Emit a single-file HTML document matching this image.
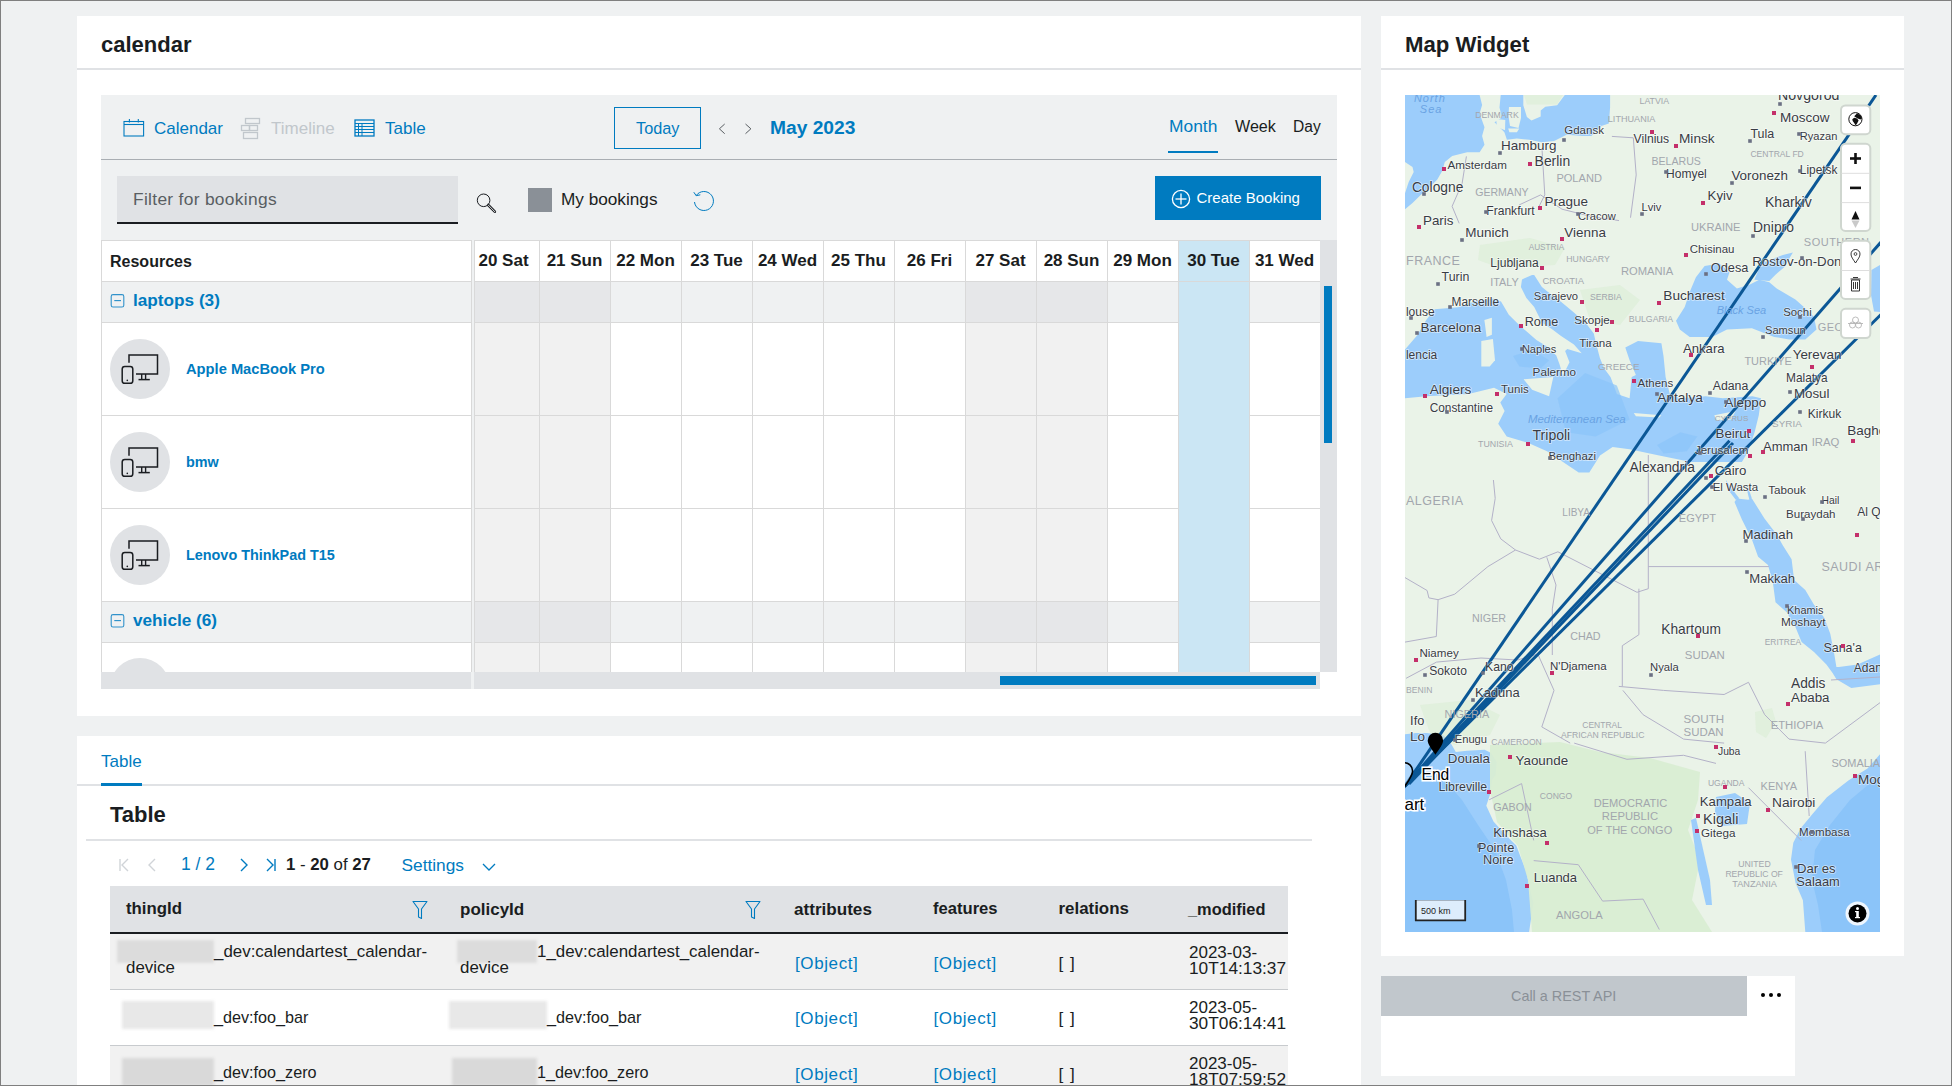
<!DOCTYPE html><html><head><meta charset="utf-8"><style>
html,body{margin:0;padding:0;}
body{width:1952px;height:1086px;overflow:hidden;position:relative;background:#eff1f2;font-family:"Liberation Sans",sans-serif;}
.t{position:absolute;white-space:pre;line-height:1;font-family:"Liberation Sans",sans-serif;}
.b{position:absolute;}
svg{position:absolute;overflow:visible;}
</style></head><body>
<div class="b" style="left:0;top:0;width:1950px;height:1084px;border:1px solid #7f7f7f;z-index:50;pointer-events:none"></div>
<div class="b" style="left:77px;top:16px;width:1284px;height:700px;background:#fff;"></div>
<div class="b" style="left:77px;top:68px;width:1284px;height:2px;background:#e0e2e5;"></div>
<div class="t" style="left:101px;top:33.88px;font-size:22px;color:#1a1d21;font-weight:700;">calendar</div>
<div class="b" style="left:101px;top:95px;width:1236px;height:594px;background:#eff1f2;"></div>
<div class="b" style="left:101px;top:159px;width:1236px;height:1px;background:#a9aeb3;"></div>
<svg style="left:123px;top:118px" width="22" height="20" viewBox="0 0 22 20">
<rect x="1" y="3.5" width="19.6" height="14.5" fill="none" stroke="#007bc0" stroke-width="1.1"/>
<line x1="1" y1="6.5" x2="20.6" y2="6.5" stroke="#007bc0" stroke-width="1.1"/>
<line x1="6.4" y1="1" x2="6.4" y2="4.5" stroke="#007bc0" stroke-width="1.1"/>
<line x1="15.3" y1="1" x2="15.3" y2="4.5" stroke="#007bc0" stroke-width="1.1"/>
</svg>
<div class="t" style="left:154px;top:119.61px;font-size:17px;color:#007bc0;font-weight:400;">Calendar</div>
<svg style="left:240px;top:117px" width="22" height="23" viewBox="0 0 22 23">
<rect x="5.5" y="1.5" width="14" height="5" fill="none" stroke="#c1c7cc" stroke-width="1.3"/>
<rect x="1.5" y="8.5" width="8" height="5" fill="none" stroke="#c1c7cc" stroke-width="1.3"/>
<rect x="9.5" y="8.5" width="8" height="5" fill="none" stroke="#c1c7cc" stroke-width="1.3"/>
<rect x="3.5" y="15.5" width="14" height="6" fill="none" stroke="#c1c7cc" stroke-width="1.3"/>
</svg>
<div class="t" style="left:271px;top:119.61px;font-size:17px;color:#c1c7cc;font-weight:400;">Timeline</div>
<svg style="left:354px;top:119px" width="22" height="19" viewBox="0 0 22 19">
<rect x="1" y="1" width="19" height="16" fill="none" stroke="#007bc0" stroke-width="1.3"/>
<line x1="1" y1="4.5" x2="20" y2="4.5" stroke="#007bc0" stroke-width="1"/>
<line x1="1" y1="7.5" x2="20" y2="7.5" stroke="#007bc0" stroke-width="1"/>
<line x1="1" y1="10.5" x2="20" y2="10.5" stroke="#007bc0" stroke-width="1"/>
<line x1="1" y1="13.5" x2="20" y2="13.5" stroke="#007bc0" stroke-width="1"/>
<line x1="4.5" y1="4" x2="4.5" y2="17" stroke="#007bc0" stroke-width="1"/>
<line x1="8" y1="4" x2="8" y2="17" stroke="#007bc0" stroke-width="1"/>
</svg>
<div class="t" style="left:385px;top:119.61px;font-size:17px;color:#007bc0;font-weight:400;">Table</div>
<div class="b" style="left:614px;top:107px;width:85px;height:40px;border:1px solid #007bc0;"></div>
<div class="t" style="left:636px;top:119.70px;font-size:16.3px;color:#007bc0;font-weight:400;">Today</div>
<svg style="left:716px;top:121px" width="40" height="16" viewBox="0 0 40 16">
<polyline points="8.7,3 3.4,7.8 8.7,12.7" fill="none" stroke="#595e62" stroke-width="1"/>
<polyline points="29.5,3 34.9,7.8 29.5,12.7" fill="none" stroke="#595e62" stroke-width="1"/>
</svg>
<div class="t" style="left:770px;top:117.75px;font-size:19.2px;color:#007bc0;font-weight:700;">May 2023</div>
<div class="t" style="left:1169px;top:117.77px;font-size:17.4px;color:#007bc0;font-weight:400;">Month</div>
<div class="b" style="left:1168px;top:151px;width:50px;height:2px;background:#007bc0;"></div>
<div class="t" style="left:1235px;top:118.37px;font-size:16.1px;color:#1a1d21;font-weight:400;">Week</div>
<div class="t" style="left:1293px;top:118.79px;font-size:15.6px;color:#1a1d21;font-weight:400;">Day</div>
<div class="b" style="left:117px;top:176px;width:341px;height:47px;background:#e0e2e5;"></div>
<div class="b" style="left:117px;top:222px;width:341px;height:1.5px;background:#1a1d21;"></div>
<div class="t" style="left:133px;top:191.27px;font-size:17.4px;color:#595e62;font-weight:400;letter-spacing:0.3px;">Filter for bookings</div>
<svg style="left:474px;top:191px" width="24" height="24" viewBox="0 0 24 24">
<circle cx="9.6" cy="9.3" r="6.3" fill="none" stroke="#1a1d21" stroke-width="1"/>
<line x1="14.2" y1="14" x2="20.8" y2="20.7" stroke="#1a1d21" stroke-width="2.6" stroke-linecap="round"/>
<line x1="14.2" y1="14" x2="20.8" y2="20.7" stroke="#eff1f2" stroke-width="0.9" stroke-linecap="round"/>
</svg>
<div class="b" style="left:528px;top:188px;width:24px;height:24px;background:#8a9097;"></div>
<div class="t" style="left:561px;top:191.44px;font-size:17.2px;color:#1a1d21;font-weight:400;">My bookings</div>
<svg style="left:689px;top:187px" width="28" height="28" viewBox="0 0 28 28">
<path d="M7.2,8.5 A9.5,9.5 0 1 1 5.5,15" fill="none" stroke="#007bc0" stroke-width="1"/>
<polyline points="4.8,5.2 7.2,8.7 11.3,7.8" fill="none" stroke="#007bc0" stroke-width="1"/>
</svg>
<div class="b" style="left:1155px;top:176px;width:166px;height:44px;background:#007bc0;"></div>
<svg style="left:1171px;top:189px" width="20" height="20" viewBox="0 0 20 20">
<circle cx="10" cy="10" r="8.6" fill="none" stroke="#fff" stroke-width="1.3"/>
<line x1="10" y1="4.5" x2="10" y2="15.5" stroke="#fff" stroke-width="1.3"/>
<line x1="4.5" y1="10" x2="15.5" y2="10" stroke="#fff" stroke-width="1.3"/>
</svg>
<div class="t" style="left:1196.5px;top:190.30px;font-size:15px;color:#fff;font-weight:400;">Create Booking</div>
<div class="b" style="left:101px;top:240px;width:1236px;height:449px;background:#ffffff;"></div>
<div class="b" style="left:101px;top:240px;width:370px;height:432px;background:#fff;"></div>
<div class="b" style="left:101px;top:240px;width:370px;height:41px;background:#fff;"></div>
<div class="b" style="left:474px;top:240px;width:65px;height:41px;background:#fff;"></div>
<div class="b" style="left:539px;top:240px;width:71px;height:41px;background:#fff;"></div>
<div class="b" style="left:610px;top:240px;width:71px;height:41px;background:#fff;"></div>
<div class="b" style="left:681px;top:240px;width:71px;height:41px;background:#fff;"></div>
<div class="b" style="left:752px;top:240px;width:71px;height:41px;background:#fff;"></div>
<div class="b" style="left:823px;top:240px;width:71px;height:41px;background:#fff;"></div>
<div class="b" style="left:894px;top:240px;width:71px;height:41px;background:#fff;"></div>
<div class="b" style="left:965px;top:240px;width:71px;height:41px;background:#fff;"></div>
<div class="b" style="left:1036px;top:240px;width:71px;height:41px;background:#fff;"></div>
<div class="b" style="left:1107px;top:240px;width:71px;height:41px;background:#fff;"></div>
<div class="b" style="left:1178px;top:240px;width:71px;height:41px;background:#cbe6f4;"></div>
<div class="b" style="left:1249px;top:240px;width:71px;height:41px;background:#fff;"></div>
<div class="b" style="left:101px;top:281px;width:370px;height:41px;background:#eff1f2;"></div>
<div class="b" style="left:474px;top:281px;width:65px;height:41px;background:#e6e7e9;"></div>
<div class="b" style="left:539px;top:281px;width:71px;height:41px;background:#e6e7e9;"></div>
<div class="b" style="left:610px;top:281px;width:71px;height:41px;background:#eff1f2;"></div>
<div class="b" style="left:681px;top:281px;width:71px;height:41px;background:#eff1f2;"></div>
<div class="b" style="left:752px;top:281px;width:71px;height:41px;background:#eff1f2;"></div>
<div class="b" style="left:823px;top:281px;width:71px;height:41px;background:#eff1f2;"></div>
<div class="b" style="left:894px;top:281px;width:71px;height:41px;background:#eff1f2;"></div>
<div class="b" style="left:965px;top:281px;width:71px;height:41px;background:#e6e7e9;"></div>
<div class="b" style="left:1036px;top:281px;width:71px;height:41px;background:#e6e7e9;"></div>
<div class="b" style="left:1107px;top:281px;width:71px;height:41px;background:#eff1f2;"></div>
<div class="b" style="left:1178px;top:281px;width:71px;height:41px;background:#cbe6f4;"></div>
<div class="b" style="left:1249px;top:281px;width:71px;height:41px;background:#eff1f2;"></div>
<div class="b" style="left:101px;top:322px;width:370px;height:93px;background:#fff;"></div>
<div class="b" style="left:474px;top:322px;width:65px;height:93px;background:#f1f1f1;"></div>
<div class="b" style="left:539px;top:322px;width:71px;height:93px;background:#f1f1f1;"></div>
<div class="b" style="left:610px;top:322px;width:71px;height:93px;background:#fff;"></div>
<div class="b" style="left:681px;top:322px;width:71px;height:93px;background:#fff;"></div>
<div class="b" style="left:752px;top:322px;width:71px;height:93px;background:#fff;"></div>
<div class="b" style="left:823px;top:322px;width:71px;height:93px;background:#fff;"></div>
<div class="b" style="left:894px;top:322px;width:71px;height:93px;background:#fff;"></div>
<div class="b" style="left:965px;top:322px;width:71px;height:93px;background:#f1f1f1;"></div>
<div class="b" style="left:1036px;top:322px;width:71px;height:93px;background:#f1f1f1;"></div>
<div class="b" style="left:1107px;top:322px;width:71px;height:93px;background:#fff;"></div>
<div class="b" style="left:1178px;top:322px;width:71px;height:93px;background:#cbe6f4;"></div>
<div class="b" style="left:1249px;top:322px;width:71px;height:93px;background:#fff;"></div>
<div class="b" style="left:101px;top:415px;width:370px;height:93px;background:#fff;"></div>
<div class="b" style="left:474px;top:415px;width:65px;height:93px;background:#f1f1f1;"></div>
<div class="b" style="left:539px;top:415px;width:71px;height:93px;background:#f1f1f1;"></div>
<div class="b" style="left:610px;top:415px;width:71px;height:93px;background:#fff;"></div>
<div class="b" style="left:681px;top:415px;width:71px;height:93px;background:#fff;"></div>
<div class="b" style="left:752px;top:415px;width:71px;height:93px;background:#fff;"></div>
<div class="b" style="left:823px;top:415px;width:71px;height:93px;background:#fff;"></div>
<div class="b" style="left:894px;top:415px;width:71px;height:93px;background:#fff;"></div>
<div class="b" style="left:965px;top:415px;width:71px;height:93px;background:#f1f1f1;"></div>
<div class="b" style="left:1036px;top:415px;width:71px;height:93px;background:#f1f1f1;"></div>
<div class="b" style="left:1107px;top:415px;width:71px;height:93px;background:#fff;"></div>
<div class="b" style="left:1178px;top:415px;width:71px;height:93px;background:#cbe6f4;"></div>
<div class="b" style="left:1249px;top:415px;width:71px;height:93px;background:#fff;"></div>
<div class="b" style="left:101px;top:508px;width:370px;height:93px;background:#fff;"></div>
<div class="b" style="left:474px;top:508px;width:65px;height:93px;background:#f1f1f1;"></div>
<div class="b" style="left:539px;top:508px;width:71px;height:93px;background:#f1f1f1;"></div>
<div class="b" style="left:610px;top:508px;width:71px;height:93px;background:#fff;"></div>
<div class="b" style="left:681px;top:508px;width:71px;height:93px;background:#fff;"></div>
<div class="b" style="left:752px;top:508px;width:71px;height:93px;background:#fff;"></div>
<div class="b" style="left:823px;top:508px;width:71px;height:93px;background:#fff;"></div>
<div class="b" style="left:894px;top:508px;width:71px;height:93px;background:#fff;"></div>
<div class="b" style="left:965px;top:508px;width:71px;height:93px;background:#f1f1f1;"></div>
<div class="b" style="left:1036px;top:508px;width:71px;height:93px;background:#f1f1f1;"></div>
<div class="b" style="left:1107px;top:508px;width:71px;height:93px;background:#fff;"></div>
<div class="b" style="left:1178px;top:508px;width:71px;height:93px;background:#cbe6f4;"></div>
<div class="b" style="left:1249px;top:508px;width:71px;height:93px;background:#fff;"></div>
<div class="b" style="left:101px;top:601px;width:370px;height:41px;background:#eff1f2;"></div>
<div class="b" style="left:474px;top:601px;width:65px;height:41px;background:#e6e7e9;"></div>
<div class="b" style="left:539px;top:601px;width:71px;height:41px;background:#e6e7e9;"></div>
<div class="b" style="left:610px;top:601px;width:71px;height:41px;background:#eff1f2;"></div>
<div class="b" style="left:681px;top:601px;width:71px;height:41px;background:#eff1f2;"></div>
<div class="b" style="left:752px;top:601px;width:71px;height:41px;background:#eff1f2;"></div>
<div class="b" style="left:823px;top:601px;width:71px;height:41px;background:#eff1f2;"></div>
<div class="b" style="left:894px;top:601px;width:71px;height:41px;background:#eff1f2;"></div>
<div class="b" style="left:965px;top:601px;width:71px;height:41px;background:#e6e7e9;"></div>
<div class="b" style="left:1036px;top:601px;width:71px;height:41px;background:#e6e7e9;"></div>
<div class="b" style="left:1107px;top:601px;width:71px;height:41px;background:#eff1f2;"></div>
<div class="b" style="left:1178px;top:601px;width:71px;height:41px;background:#cbe6f4;"></div>
<div class="b" style="left:1249px;top:601px;width:71px;height:41px;background:#eff1f2;"></div>
<div class="b" style="left:101px;top:642px;width:370px;height:30px;background:#fff;"></div>
<div class="b" style="left:474px;top:642px;width:65px;height:30px;background:#f1f1f1;"></div>
<div class="b" style="left:539px;top:642px;width:71px;height:30px;background:#f1f1f1;"></div>
<div class="b" style="left:610px;top:642px;width:71px;height:30px;background:#fff;"></div>
<div class="b" style="left:681px;top:642px;width:71px;height:30px;background:#fff;"></div>
<div class="b" style="left:752px;top:642px;width:71px;height:30px;background:#fff;"></div>
<div class="b" style="left:823px;top:642px;width:71px;height:30px;background:#fff;"></div>
<div class="b" style="left:894px;top:642px;width:71px;height:30px;background:#fff;"></div>
<div class="b" style="left:965px;top:642px;width:71px;height:30px;background:#f1f1f1;"></div>
<div class="b" style="left:1036px;top:642px;width:71px;height:30px;background:#f1f1f1;"></div>
<div class="b" style="left:1107px;top:642px;width:71px;height:30px;background:#fff;"></div>
<div class="b" style="left:1178px;top:642px;width:71px;height:30px;background:#cbe6f4;"></div>
<div class="b" style="left:1249px;top:642px;width:71px;height:30px;background:#fff;"></div>
<div class="b" style="left:101px;top:281px;width:370px;height:1px;background:#d9d9d9;"></div>
<div class="b" style="left:474px;top:281px;width:846px;height:1px;background:#d9d9d9;"></div>
<div class="b" style="left:101px;top:322px;width:370px;height:1px;background:#d9d9d9;"></div>
<div class="b" style="left:474px;top:322px;width:846px;height:1px;background:#d9d9d9;"></div>
<div class="b" style="left:101px;top:415px;width:370px;height:1px;background:#d9d9d9;"></div>
<div class="b" style="left:474px;top:415px;width:846px;height:1px;background:#d9d9d9;"></div>
<div class="b" style="left:101px;top:508px;width:370px;height:1px;background:#d9d9d9;"></div>
<div class="b" style="left:474px;top:508px;width:846px;height:1px;background:#d9d9d9;"></div>
<div class="b" style="left:101px;top:601px;width:370px;height:1px;background:#d9d9d9;"></div>
<div class="b" style="left:474px;top:601px;width:846px;height:1px;background:#d9d9d9;"></div>
<div class="b" style="left:101px;top:642px;width:370px;height:1px;background:#d9d9d9;"></div>
<div class="b" style="left:474px;top:642px;width:846px;height:1px;background:#d9d9d9;"></div>
<div class="b" style="left:101px;top:240px;width:1236px;height:1px;background:#d9d9d9;"></div>
<div class="b" style="left:101px;top:240px;width:1px;height:449px;background:#d9d9d9;"></div>
<div class="b" style="left:471px;top:240px;width:1px;height:432px;background:#d9d9d9;"></div>
<div class="b" style="left:474px;top:240px;width:1px;height:432px;background:#d9d9d9;"></div>
<div class="b" style="left:472px;top:240px;width:2px;height:432px;background:#eff1f2;"></div>
<div class="b" style="left:539px;top:240px;width:1px;height:432px;background:#d9d9d9;"></div>
<div class="b" style="left:610px;top:240px;width:1px;height:432px;background:#d9d9d9;"></div>
<div class="b" style="left:681px;top:240px;width:1px;height:432px;background:#d9d9d9;"></div>
<div class="b" style="left:752px;top:240px;width:1px;height:432px;background:#d9d9d9;"></div>
<div class="b" style="left:823px;top:240px;width:1px;height:432px;background:#d9d9d9;"></div>
<div class="b" style="left:894px;top:240px;width:1px;height:432px;background:#d9d9d9;"></div>
<div class="b" style="left:965px;top:240px;width:1px;height:432px;background:#d9d9d9;"></div>
<div class="b" style="left:1036px;top:240px;width:1px;height:432px;background:#d9d9d9;"></div>
<div class="b" style="left:1107px;top:240px;width:1px;height:432px;background:#d9d9d9;"></div>
<div class="b" style="left:1178px;top:240px;width:1px;height:432px;background:#d9d9d9;"></div>
<div class="b" style="left:1249px;top:240px;width:1px;height:432px;background:#d9d9d9;"></div>
<div class="b" style="left:1320px;top:240px;width:1px;height:432px;background:#d9d9d9;"></div>
<div class="b" style="left:1179px;top:282px;width:70px;height:390px;background:#cbe6f4;"></div>
<div class="t" style="left:110px;top:253.76px;font-size:16px;color:#1a1d21;font-weight:700;">Resources</div>
<div class="t" style="left:468px;width:71px;top:252.01px;font-size:17px;font-weight:700;color:#1a1d21;text-align:center">20 Sat</div>
<div class="t" style="left:539px;width:71px;top:252.01px;font-size:17px;font-weight:700;color:#1a1d21;text-align:center">21 Sun</div>
<div class="t" style="left:610px;width:71px;top:252.01px;font-size:17px;font-weight:700;color:#1a1d21;text-align:center">22 Mon</div>
<div class="t" style="left:681px;width:71px;top:252.01px;font-size:17px;font-weight:700;color:#1a1d21;text-align:center">23 Tue</div>
<div class="t" style="left:752px;width:71px;top:252.01px;font-size:17px;font-weight:700;color:#1a1d21;text-align:center">24 Wed</div>
<div class="t" style="left:823px;width:71px;top:252.01px;font-size:17px;font-weight:700;color:#1a1d21;text-align:center">25 Thu</div>
<div class="t" style="left:894px;width:71px;top:252.01px;font-size:17px;font-weight:700;color:#1a1d21;text-align:center">26 Fri</div>
<div class="t" style="left:965px;width:71px;top:252.01px;font-size:17px;font-weight:700;color:#1a1d21;text-align:center">27 Sat</div>
<div class="t" style="left:1036px;width:71px;top:252.01px;font-size:17px;font-weight:700;color:#1a1d21;text-align:center">28 Sun</div>
<div class="t" style="left:1107px;width:71px;top:252.01px;font-size:17px;font-weight:700;color:#1a1d21;text-align:center">29 Mon</div>
<div class="t" style="left:1178px;width:71px;top:252.01px;font-size:17px;font-weight:700;color:#1a1d21;text-align:center">30 Tue</div>
<div class="t" style="left:1249px;width:71px;top:252.01px;font-size:17px;font-weight:700;color:#1a1d21;text-align:center">31 Wed</div>
<svg style="left:110px;top:294px" width="14" height="14" viewBox="0 0 14 14">
<rect x="1.2" y="0.6" width="12.6" height="12.4" rx="1.8" fill="none" stroke="#007bc0" stroke-opacity="0.8" stroke-width="1.1"/>
<line x1="4.3" y1="6.6" x2="11" y2="6.6" stroke="#007bc0" stroke-opacity="0.85" stroke-width="1.1"/>
</svg>
<div class="t" style="left:133px;top:292.44px;font-size:17.2px;color:#007bc0;font-weight:700;">laptops (3)</div>
<svg style="left:110px;top:614px" width="14" height="14" viewBox="0 0 14 14">
<rect x="1.2" y="0.6" width="12.6" height="12.4" rx="1.8" fill="none" stroke="#007bc0" stroke-opacity="0.8" stroke-width="1.1"/>
<line x1="4.3" y1="6.6" x2="11" y2="6.6" stroke="#007bc0" stroke-opacity="0.85" stroke-width="1.1"/>
</svg>
<div class="t" style="left:133px;top:612.44px;font-size:17.2px;color:#007bc0;font-weight:700;">vehicle (6)</div>
<div class="b" style="left:110px;top:339px;width:60px;height:60px;border-radius:50%;background:#e0e2e5"></div>
<svg style="left:118px;top:347px" width="44" height="44" viewBox="0 0 44 44">
<path d="M11,15.8 V8 H39.5 V27 H18" fill="none" stroke="#1a1d21" stroke-width="1.5"/>
<rect x="4.2" y="19.5" width="10.6" height="16.8" rx="2.6" fill="none" stroke="#1a1d21" stroke-width="1.5"/>
<line x1="23.7" y1="27" x2="23.7" y2="32.5" stroke="#1a1d21" stroke-width="1.4"/>
<line x1="27.6" y1="27" x2="27.6" y2="32.5" stroke="#1a1d21" stroke-width="1.4"/>
<line x1="20.5" y1="32.6" x2="31.8" y2="32.6" stroke="#1a1d21" stroke-width="1.5"/>
<circle cx="9.3" cy="33.4" r="0.8" fill="#1a1d21"/>
</svg>
<div class="b" style="left:110px;top:432px;width:60px;height:60px;border-radius:50%;background:#e0e2e5"></div>
<svg style="left:118px;top:440px" width="44" height="44" viewBox="0 0 44 44">
<path d="M11,15.8 V8 H39.5 V27 H18" fill="none" stroke="#1a1d21" stroke-width="1.5"/>
<rect x="4.2" y="19.5" width="10.6" height="16.8" rx="2.6" fill="none" stroke="#1a1d21" stroke-width="1.5"/>
<line x1="23.7" y1="27" x2="23.7" y2="32.5" stroke="#1a1d21" stroke-width="1.4"/>
<line x1="27.6" y1="27" x2="27.6" y2="32.5" stroke="#1a1d21" stroke-width="1.4"/>
<line x1="20.5" y1="32.6" x2="31.8" y2="32.6" stroke="#1a1d21" stroke-width="1.5"/>
<circle cx="9.3" cy="33.4" r="0.8" fill="#1a1d21"/>
</svg>
<div class="b" style="left:110px;top:525px;width:60px;height:60px;border-radius:50%;background:#e0e2e5"></div>
<svg style="left:118px;top:533px" width="44" height="44" viewBox="0 0 44 44">
<path d="M11,15.8 V8 H39.5 V27 H18" fill="none" stroke="#1a1d21" stroke-width="1.5"/>
<rect x="4.2" y="19.5" width="10.6" height="16.8" rx="2.6" fill="none" stroke="#1a1d21" stroke-width="1.5"/>
<line x1="23.7" y1="27" x2="23.7" y2="32.5" stroke="#1a1d21" stroke-width="1.4"/>
<line x1="27.6" y1="27" x2="27.6" y2="32.5" stroke="#1a1d21" stroke-width="1.4"/>
<line x1="20.5" y1="32.6" x2="31.8" y2="32.6" stroke="#1a1d21" stroke-width="1.5"/>
<circle cx="9.3" cy="33.4" r="0.8" fill="#1a1d21"/>
</svg>
<div class="t" style="left:186px;top:361.96px;font-size:14.7px;color:#007bc0;font-weight:700;">Apple MacBook Pro</div>
<div class="t" style="left:186px;top:455.21px;font-size:14.4px;color:#007bc0;font-weight:700;">bmw</div>
<div class="t" style="left:186px;top:548.21px;font-size:14.4px;color:#007bc0;font-weight:700;">Lenovo ThinkPad T15</div>
<div class="b" style="left:110px;top:658px;width:60px;height:14px;overflow:hidden"><div style="width:60px;height:60px;border-radius:50%;background:#e0e2e5"></div></div>
<div class="b" style="left:1320px;top:240px;width:17px;height:432px;background:#e0e2e5;"></div>
<div class="b" style="left:1324px;top:286px;width:8px;height:157px;background:#007bc0;"></div>
<div class="b" style="left:101px;top:672px;width:1219px;height:17px;background:#e0e2e5;"></div>
<div class="b" style="left:471px;top:672px;width:3px;height:17px;background:#eff1f2;"></div>
<div class="b" style="left:1000px;top:676px;width:316px;height:9px;background:#007bc0;"></div>
<div class="b" style="left:1320px;top:672px;width:17px;height:17px;background:#fff;"></div>
<div class="b" style="left:77px;top:736px;width:1284px;height:350px;background:#fff;"></div>
<div class="b" style="left:77px;top:784px;width:1284px;height:2px;background:#e0e2e5;"></div>
<div class="t" style="left:101px;top:752.61px;font-size:17px;color:#007bc0;font-weight:400;">Table</div>
<div class="b" style="left:101px;top:783px;width:41px;height:3px;background:#007bc0;"></div>
<div class="t" style="left:110px;top:804.38px;font-size:22px;color:#1a1d21;font-weight:700;">Table</div>
<div class="b" style="left:86px;top:839px;width:1226px;height:2px;background:#e0e2e5;"></div>
<svg style="left:115px;top:856px" width="390" height="20" viewBox="0 0 390 20">
<line x1="5" y1="3" x2="5" y2="15" stroke="#d0d4d8" stroke-width="1.4"/>
<polyline points="13,3 7,9 13,15" fill="none" stroke="#d0d4d8" stroke-width="1.4"/>
<polyline points="40,3 34,9 40,15" fill="none" stroke="#d0d4d8" stroke-width="1.4"/>
<polyline points="126,3 132,9 126,15" fill="none" stroke="#007bc0" stroke-width="1.4"/>
<polyline points="152,3 158,9 152,15" fill="none" stroke="#007bc0" stroke-width="1.4"/>
<line x1="160" y1="3" x2="160" y2="15" stroke="#007bc0" stroke-width="1.4"/>
<polyline points="368,8 374,14 380,8" fill="none" stroke="#007bc0" stroke-width="1.3"/>
</svg>
<div class="t" style="left:181px;top:856.39px;font-size:17.5px;color:#007bc0;font-weight:400;">1 / 2</div>
<div class="t" style="left:286px;top:856.98px;font-size:16.8px;color:#1a1d21"><b>1</b> - <b>20</b> of <b>27</b></div>
<div class="t" style="left:401.5px;top:856.56px;font-size:17.3px;color:#007bc0;font-weight:400;">Settings</div>
<div class="b" style="left:110px;top:886px;width:1178px;height:47px;background:#e0e2e5;"></div>
<div class="b" style="left:110px;top:932px;width:1178px;height:1.5px;background:#1a1d21;"></div>
<div class="t" style="left:126px;top:900.78px;font-size:16.8px;color:#1a1d21;font-weight:700;">thingId</div>
<div class="t" style="left:460px;top:900.61px;font-size:17px;color:#1a1d21;font-weight:700;">policyId</div>
<div class="t" style="left:794px;top:900.52px;font-size:17.1px;color:#1a1d21;font-weight:700;">attributes</div>
<div class="t" style="left:933px;top:900.95px;font-size:16.6px;color:#1a1d21;font-weight:700;">features</div>
<div class="t" style="left:1058.5px;top:900.69px;font-size:16.9px;color:#1a1d21;font-weight:700;">relations</div>
<div class="t" style="left:1188px;top:901.12px;font-size:16.4px;color:#1a1d21;font-weight:700;">_modified</div>
<svg style="left:412px;top:900px" width="16" height="20" viewBox="0 0 16 20">
<path d="M1,1.5 H15 L9.5,9 V18.5 L6.5,17 V9 Z" fill="none" stroke="#007bc0" stroke-width="1.1" stroke-linejoin="round"/>
</svg>
<svg style="left:745px;top:900px" width="16" height="20" viewBox="0 0 16 20">
<path d="M1,1.5 H15 L9.5,9 V18.5 L6.5,17 V9 Z" fill="none" stroke="#007bc0" stroke-width="1.1" stroke-linejoin="round"/>
</svg>
<div class="b" style="left:110px;top:934px;width:1178px;height:55px;background:#f1f1f1;"></div>
<div class="b" style="left:110px;top:989px;width:1178px;height:56px;background:#fff;"></div>
<div class="b" style="left:110px;top:1045px;width:1178px;height:41px;background:#f1f1f1;"></div>
<div class="b" style="left:110px;top:989px;width:1178px;height:1px;background:#c8cbce;"></div>
<div class="b" style="left:110px;top:1045px;width:1178px;height:1px;background:#c8cbce;"></div>
<div class="b" style="left:117px;top:940px;width:97px;height:23px;background:#dcdcdc;filter:blur(1.5px)"></div>
<div class="b" style="left:457px;top:940px;width:80px;height:23px;background:#dcdcdc;filter:blur(1.5px)"></div>
<div class="b" style="left:122px;top:1001px;width:92px;height:28px;background:#e8e8e8;filter:blur(1.5px)"></div>
<div class="b" style="left:449px;top:1001px;width:98px;height:28px;background:#e8e8e8;filter:blur(1.5px)"></div>
<div class="b" style="left:122px;top:1058px;width:92px;height:28px;background:#d9d9d9;filter:blur(1.5px)"></div>
<div class="b" style="left:452px;top:1058px;width:85px;height:28px;background:#d9d9d9;filter:blur(1.5px)"></div>
<div class="t" style="left:214px;top:943.69px;font-size:16.9px;color:#1a1d21;font-weight:400;">_dev:calendartest_calendar-</div>
<div class="t" style="left:126px;top:959.69px;font-size:16.9px;color:#1a1d21;font-weight:400;">device</div>
<div class="t" style="left:537px;top:943.69px;font-size:16.9px;color:#1a1d21;font-weight:400;">1_dev:calendartest_calendar-</div>
<div class="t" style="left:460px;top:959.69px;font-size:16.9px;color:#1a1d21;font-weight:400;">device</div>
<div class="t" style="left:214px;top:1008.99px;font-size:16.2px;color:#1a1d21;font-weight:400;">_dev:foo_bar</div>
<div class="t" style="left:547px;top:1008.99px;font-size:16.2px;color:#1a1d21;font-weight:400;">_dev:foo_bar</div>
<div class="t" style="left:214px;top:1064.29px;font-size:16.2px;color:#1a1d21;font-weight:400;">_dev:foo_zero</div>
<div class="t" style="left:537px;top:1064.29px;font-size:16.2px;color:#1a1d21;font-weight:400;">1_dev:foo_zero</div>
<div class="t" style="left:795px;top:954.61px;font-size:17px;color:#007bc0;font-weight:400;letter-spacing:0.6px;">[Object]</div>
<div class="t" style="left:933.5px;top:954.61px;font-size:17px;color:#007bc0;font-weight:400;letter-spacing:0.6px;">[Object]</div>
<div class="t" style="left:1058.5px;top:954.61px;font-size:17px;color:#1a1d21;font-weight:400;letter-spacing:1px;">[ ]</div>
<div class="t" style="left:795px;top:1010.01px;font-size:17px;color:#007bc0;font-weight:400;letter-spacing:0.6px;">[Object]</div>
<div class="t" style="left:933.5px;top:1010.01px;font-size:17px;color:#007bc0;font-weight:400;letter-spacing:0.6px;">[Object]</div>
<div class="t" style="left:1058.5px;top:1010.01px;font-size:17px;color:#1a1d21;font-weight:400;letter-spacing:1px;">[ ]</div>
<div class="t" style="left:795px;top:1065.61px;font-size:17px;color:#007bc0;font-weight:400;letter-spacing:0.6px;">[Object]</div>
<div class="t" style="left:933.5px;top:1065.61px;font-size:17px;color:#007bc0;font-weight:400;letter-spacing:0.6px;">[Object]</div>
<div class="t" style="left:1058.5px;top:1065.61px;font-size:17px;color:#1a1d21;font-weight:400;letter-spacing:1px;">[ ]</div>
<div class="t" style="left:1189px;top:943.61px;font-size:17px;color:#1a1d21;font-weight:400;">2023-03-</div>
<div class="t" style="left:1189px;top:959.76px;font-size:17.3px;color:#1a1d21;font-weight:400;">10T14:13:37</div>
<div class="t" style="left:1189px;top:999.11px;font-size:17px;color:#1a1d21;font-weight:400;">2023-05-</div>
<div class="t" style="left:1189px;top:1015.26px;font-size:17.3px;color:#1a1d21;font-weight:400;">30T06:14:41</div>
<div class="t" style="left:1189px;top:1055.11px;font-size:17px;color:#1a1d21;font-weight:400;">2023-05-</div>
<div class="t" style="left:1189px;top:1071.26px;font-size:17.3px;color:#1a1d21;font-weight:400;">18T07:59:52</div>
<div class="b" style="left:1381px;top:16px;width:523px;height:940px;background:#fff;"></div>
<div class="b" style="left:1381px;top:68px;width:523px;height:2px;background:#e0e2e5;"></div>
<div class="t" style="left:1405px;top:34.41px;font-size:22.2px;color:#1a1d21;font-weight:700;">Map Widget</div>
<svg style="left:1405px;top:95px;overflow:hidden" width="475" height="837" viewBox="1405 95 475 837">
<rect x="1405" y="95" width="475" height="837" fill="#eaf3e8"/>
<polygon points="1405.0,95.0 1479.6,95.0 1482.1,104.9 1479.6,113.6 1484.5,127.3 1482.1,136.0 1484.5,144.7 1479.6,152.2 1467.1,152.2 1452.2,155.9 1444.8,162.1 1442.3,170.8 1437.3,179.5 1429.9,186.9 1421.2,194.4 1412.5,203.1 1405.0,209.3" fill="#9ccdfb" />
<polygon points="1500.7,95.0 1523.3,95.0 1523.3,105.2 1526.9,117.0 1531.5,120.6 1540.7,116.5 1540.7,110.4 1545.3,106.8 1557.1,105.2 1564.8,95.0 1610.1,95.0 1610.1,107.4 1608.8,123.6 1601.4,126.1 1591.4,136.0 1582.7,136.0 1566.6,134.8 1554.1,141.0 1541.7,142.2 1529.3,139.7 1516.9,138.5 1506.9,139.7 1504.4,132.3 1499.5,127.3 1494.5,122.3 1501.9,117.4 1499.5,107.4" fill="#9ccdfb" />
<polygon points="1405.0,349.6 1417.7,334.7 1426.2,319.9 1434.7,309.3 1458.0,307.2 1477.0,300.8 1494.0,298.7 1501.0,301.4 1508.8,314.7 1518.7,324.6 1526.4,331.3 1536.4,340.1 1547.4,346.7 1556.3,355.6 1559.6,364.4 1562.9,375.4 1569.5,362.2 1565.1,351.1 1567.3,348.9 1581.7,353.3 1573.9,344.5 1560.7,335.7 1551.8,329.1 1541.9,322.4 1534.2,307.0 1526.4,298.1 1520.9,287.1 1522.0,279.4 1532.0,274.9 1534.2,274.9 1541.9,287.1 1547.4,291.5 1560.7,301.4 1573.9,312.5 1586.1,323.5 1593.8,333.5 1596.0,343.2 1599.9,358.1 1604.2,368.6 1610.5,377.1 1616.9,394.1 1629.6,398.3 1631.7,377.1 1635.9,375.0 1629.6,360.2 1625.3,347.5 1638.0,341.1 1661.4,343.2 1663.5,355.9 1665.6,377.1 1669.8,394.1 1680.4,398.3 1705.8,396.2 1722.8,398.3 1752.5,396.2 1761.0,398.3 1758.8,415.3 1754.6,432.2 1748.2,451.3 1741.9,461.9 1722.8,461.9 1691.0,461.9 1659.2,455.5 1629.6,449.2 1612.6,447.0 1600.0,455.5 1589.3,472.5 1578.7,472.5 1566.0,464.0 1547.0,451.3 1527.9,442.8 1506.7,436.4 1498.2,423.7 1504.6,411.0 1500.3,402.5 1506.7,394.1 1494.0,387.7 1468.6,394.1 1426.2,396.2 1405.0,398.3" fill="#9ccdfb" />
<polygon points="1695.9,277.2 1704.6,266.0 1719.5,263.6 1729.5,272.3 1727.0,279.7 1736.9,288.4 1749.4,284.7 1759.3,279.7 1769.3,282.2 1776.7,288.4 1795.4,299.6 1805.3,308.3 1814.0,317.0 1816.5,329.4 1805.3,339.4 1789.1,339.4 1774.2,336.9 1751.9,328.2 1727.0,329.4 1712.1,336.9 1689.7,336.9 1679.8,329.4 1676.0,320.7 1684.7,307.1 1689.7,292.1" fill="#9ccdfb" />
<polygon points="1754.3,279.7 1758.1,271.0 1764.3,262.3 1782.9,254.9 1792.9,252.4 1784.2,267.3 1775.5,274.7 1769.3,281.0" fill="#9ccdfb" />
<polygon points="1871.4,270.0 1880.0,265.0 1880.0,312.0 1874.0,311.5 1871.0,295.0" fill="#9ccdfb" />
<polygon points="1736.9,498.4 1748.1,499.7 1751.9,498.4 1764.3,518.3 1776.7,534.5 1782.9,545.6 1791.6,559.3 1794.1,579.9 1805.3,589.9 1814.0,604.8 1824.0,617.2 1830.2,633.4 1833.9,652.0 1836.4,666.9 1838.9,666.9 1857.5,664.4 1880.0,654.5 1880.0,684.3 1851.3,688.0 1836.4,679.3 1832.6,673.1 1826.4,664.4 1814.0,652.0 1801.6,642.1 1795.4,627.1 1786.7,612.2 1775.5,602.3 1773.0,583.6 1768.0,565.0 1758.1,556.8 1751.9,539.4 1741.9,519.5 1734.5,502.1" fill="#9ccdfb" />
<polygon points="1725.8,479.8 1730.7,487.2 1739.4,498.4 1735.7,499.7 1728.2,489.7" fill="#9ccdfb" />
<polygon points="1748.1,487.2 1751.9,498.4 1749.4,499.7 1746.9,489.7" fill="#9ccdfb" />
<polygon points="1880.0,754.2 1867.5,768.6 1848.4,780.5 1826.9,797.3 1812.5,814.0 1800.5,828.4 1793.3,842.8 1791.0,859.5 1795.7,883.4 1802.9,900.2 1805.3,932.0 1880.0,932.0" fill="#9ccdfb" />
<polygon points="1405.0,734.3 1416.0,733.1 1427.1,733.1 1443.7,735.4 1451.4,744.2 1455.8,751.9 1466.9,750.8 1484.6,749.7 1491.2,753.0 1496.7,761.9 1495.6,775.1 1492.0,780.0 1490.6,792.8 1486.3,805.7 1493.5,821.4 1504.9,834.2 1516.3,845.6 1520.6,857.1 1526.3,871.3 1529.1,885.6 1533.4,902.7 1529.1,932.0 1405.0,932.0" fill="#9ccdfb" />
<polygon points="1717.0,800.0 1735.0,797.0 1743.0,805.0 1740.0,822.0 1722.0,823.0 1716.0,812.0" fill="#9ccdfb" />
<polygon points="1405.0,765.0 1440.0,775.0 1462.0,800.0 1478.0,825.0 1495.0,850.0 1506.0,880.0 1512.0,910.0 1514.0,932.0 1405.0,932.0" fill="#8bc4f9" />
<polygon points="1880.0,775.0 1850.0,800.0 1830.0,825.0 1815.0,850.0 1812.0,880.0 1818.0,905.0 1822.0,932.0 1880.0,932.0" fill="#8bc4f9" />
<polygon points="1557.5,398.3 1585.1,372.9 1616.9,385.6 1629.6,419.5 1595.7,436.4 1566.0,432.2" fill="#8bc4f9" opacity="0.7"/>
<polygon points="1513.0,356.0 1532.1,349.6 1549.1,360.2 1540.6,368.6 1519.4,366.5" fill="#8bc4f9" opacity="0.7"/>
<polygon points="1657.1,444.9 1680.4,432.2 1697.4,436.4 1686.8,451.3 1663.5,453.4" fill="#8bc4f9" opacity="0.7"/>
<polygon points="1405.0,162.1 1412.5,167.1 1413.7,172.0 1408.7,182.0 1405.0,193.2" fill="#eaf3e8" />
<polygon points="1509.0,107.0 1521.0,107.0 1521.0,118.0 1518.5,128.0 1510.0,126.0 1508.5,116.0" fill="#eaf3e8" />
<polygon points="1496.1,119.1 1505.3,120.0 1505.0,130.3 1497.0,127.0" fill="#eaf3e8" />
<polygon points="1508.2,128.6 1519.3,128.6 1516.9,132.3 1509.4,132.3" fill="#eaf3e8" />
<polygon points="1484.4,319.9 1491.9,317.8 1491.9,334.7 1486.6,336.9" fill="#eaf3e8" />
<polygon points="1481.3,341.1 1492.9,339.0 1495.0,360.2 1489.7,366.5 1481.3,366.5" fill="#eaf3e8" />
<polygon points="1523.6,379.2 1553.3,377.1 1549.1,396.2 1532.1,389.8" fill="#eaf3e8" />
<polygon points="1633.8,413.1 1661.4,415.3 1659.2,417.4 1635.9,416.3" fill="#eaf3e8" />
<polygon points="1714.3,415.3 1735.5,411.0 1731.3,419.5 1716.4,420.6" fill="#eaf3e8" />
<polygon points="1490.0,745.0 1560.0,742.0 1600.0,752.0 1650.0,758.0 1700.0,772.0 1698.0,800.0 1688.0,830.0 1700.0,860.0 1692.0,900.0 1712.0,932.0 1532.0,932.0 1528.0,880.0 1518.0,846.0 1497.0,822.0 1490.0,790.0" fill="#d9edd3" opacity="0.95"/>
<polygon points="1420.0,705.0 1470.0,700.0 1500.0,715.0 1490.0,735.0 1455.0,745.0 1430.0,733.0" fill="#d9edd3" opacity="0.55"/>
<polygon points="1755.0,712.0 1772.0,708.0 1776.0,722.0 1766.0,738.0 1756.0,732.0" fill="#d9edd3" opacity="0.55"/>
<polygon points="1524.0,95.0 1563.0,95.0 1557.0,104.5 1527.0,104.5" fill="#d9edd3" opacity="0.55"/>
<polygon points="1480.0,245.0 1530.0,238.0 1565.0,248.0 1555.0,265.0 1500.0,268.0 1478.0,260.0" fill="#d9edd3" opacity="0.55"/>
<polygon points="1580.0,290.0 1620.0,285.0 1640.0,300.0 1620.0,325.0 1590.0,320.0" fill="#d9edd3" opacity="0.55"/>
<polygon points="1716.0,797.0 1735.0,793.0 1750.0,803.0 1747.0,824.0 1722.0,826.0 1715.0,812.0" fill="#9ccdfb" />
<polygon points="1691.0,820.0 1696.0,818.0 1710.0,880.0 1712.0,905.0 1706.0,905.0 1698.0,870.0" fill="#9ccdfb" />
<polyline points="1493.4,480.0 1495.2,498.4 1491.6,520.5 1500.8,538.9 1515.5,550.0" fill="none" stroke="#b3b1c8" stroke-width="1"/>
<polyline points="1515.5,550.0 1487.9,566.6 1454.7,594.2 1438.1,599.7 1428.9,597.9 1427.1,590.5 1405.0,577.6" fill="none" stroke="#b3b1c8" stroke-width="1"/>
<polyline points="1515.5,550.0 1539.4,559.2 1557.9,551.8 1637.0,592.3 1648.3,588.7 1648.3,455.0" fill="none" stroke="#b3b1c8" stroke-width="1"/>
<polyline points="1546.8,557.3 1556.0,585.0 1552.3,608.9 1552.3,655.0" fill="none" stroke="#b3b1c8" stroke-width="1"/>
<polyline points="1638.9,588.7 1638.9,634.7 1622.3,645.7 1622.3,686.4" fill="none" stroke="#b3b1c8" stroke-width="1"/>
<polyline points="1438.1,599.7 1436.3,636.5 1405.0,642.1" fill="none" stroke="#b3b1c8" stroke-width="1"/>
<polyline points="1406.1,678.3 1436.5,662.1 1481.0,658.0 1517.5,660.0 1537.8,654.0" fill="none" stroke="#b3b1c8" stroke-width="1"/>
<polyline points="1537.8,654.0 1554.0,690.4 1541.8,726.9 1570.2,743.1" fill="none" stroke="#b3b1c8" stroke-width="1"/>
<polyline points="1648.3,566.6 1768.9,566.6" fill="none" stroke="#b3b1c8" stroke-width="1"/>
<polyline points="1622.9,690.4 1643.1,714.7 1683.6,739.1 1724.1,743.1" fill="none" stroke="#b3b1c8" stroke-width="1"/>
<polyline points="1618.8,686.4 1663.4,690.4 1724.1,694.5 1748.5,682.3" fill="none" stroke="#b3b1c8" stroke-width="1"/>
<polyline points="1574.2,743.1 1626.9,759.3 1683.6,755.3 1716.0,763.4" fill="none" stroke="#b3b1c8" stroke-width="1"/>
<polyline points="1748.5,682.3 1764.7,714.7 1789.0,739.1 1825.4,743.1 1880.1,702.6" fill="none" stroke="#b3b1c8" stroke-width="1"/>
<polyline points="1805.2,751.2 1809.2,816.0" fill="none" stroke="#b3b1c8" stroke-width="1"/>
<polyline points="1533.7,860.6 1578.3,864.7 1602.6,901.1 1643.1,899.1 1659.3,929.5" fill="none" stroke="#b3b1c8" stroke-width="1"/>
<polyline points="1748.5,787.7 1801.1,840.4" fill="none" stroke="#b3b1c8" stroke-width="1"/>
<polyline points="1489.1,799.8 1521.6,783.6 1533.7,840.4" fill="none" stroke="#b3b1c8" stroke-width="1"/>
<polyline points="1542.0,149.2 1544.8,194.9 1539.1,206.3" fill="none" stroke="#b3b1c8" stroke-width="1"/>
<polyline points="1466.4,156.4 1462.1,183.5 1452.1,206.3 1459.2,223.4" fill="none" stroke="#b3b1c8" stroke-width="1"/>
<polyline points="1519.2,204.9 1540.6,194.9 1562.0,209.2 1590.5,216.3 1619.0,220.6" fill="none" stroke="#b3b1c8" stroke-width="1"/>
<polyline points="1611.9,136.4 1633.3,137.8 1636.2,174.9 1630.5,217.7" fill="none" stroke="#b3b1c8" stroke-width="1"/>
<polyline points="1831.0,680.0 1880.0,677.0" fill="none" stroke="#b3b1c8" stroke-width="1"/>
<line x1="1405" y1="786" x2="1876" y2="95" stroke="#0b5796" stroke-width="3"/>
<line x1="1405" y1="786" x2="1881" y2="242" stroke="#0b5796" stroke-width="3"/>
<line x1="1403" y1="788" x2="1881" y2="314.5" stroke="#0b5796" stroke-width="3"/>
<line x1="1405" y1="786" x2="1729.5" y2="440.8" stroke="#0b5796" stroke-width="3"/>
<line x1="1409" y1="784" x2="1733" y2="443" stroke="#0b5796" stroke-width="3"/>
<text x="1778" y="99.9" fill="#393c44" stroke="#ffffff" stroke-width="1.6" stroke-opacity="0.55" paint-order="stroke" textLength="61.4" lengthAdjust="spacingAndGlyphs" style="font-size:14.16px;font-family:'Liberation Sans',sans-serif">Novgorod</text>
<text x="1780" y="121.7" fill="#393c44" stroke="#ffffff" stroke-width="1.6" stroke-opacity="0.55" paint-order="stroke" textLength="49.5" lengthAdjust="spacingAndGlyphs" style="font-size:13.50px;font-family:'Liberation Sans',sans-serif">Moscow</text>
<text x="1564.3" y="133.5" fill="#393c44" stroke="#ffffff" stroke-width="1.6" stroke-opacity="0.55" paint-order="stroke" textLength="39.6" lengthAdjust="spacingAndGlyphs" style="font-size:11.49px;font-family:'Liberation Sans',sans-serif">Gdansk</text>
<text x="1633.6" y="143.4" fill="#393c44" stroke="#ffffff" stroke-width="1.6" stroke-opacity="0.55" paint-order="stroke" textLength="35.6" lengthAdjust="spacingAndGlyphs" style="font-size:12.16px;font-family:'Liberation Sans',sans-serif">Vilnius</text>
<text x="1679" y="143.4" fill="#393c44" stroke="#ffffff" stroke-width="1.6" stroke-opacity="0.55" paint-order="stroke" textLength="35.6" lengthAdjust="spacingAndGlyphs" style="font-size:13.63px;font-family:'Liberation Sans',sans-serif">Minsk</text>
<text x="1750.4" y="138.3" fill="#393c44" stroke="#ffffff" stroke-width="1.6" stroke-opacity="0.55" paint-order="stroke" textLength="23.8" lengthAdjust="spacingAndGlyphs" style="font-size:12.47px;font-family:'Liberation Sans',sans-serif">Tula</text>
<text x="1799.8" y="139.5" fill="#393c44" stroke="#ffffff" stroke-width="1.6" stroke-opacity="0.55" paint-order="stroke" textLength="37.6" lengthAdjust="spacingAndGlyphs" style="font-size:11.09px;font-family:'Liberation Sans',sans-serif">Ryazan</text>
<text x="1501" y="150.2" fill="#393c44" stroke="#ffffff" stroke-width="1.6" stroke-opacity="0.55" paint-order="stroke" textLength="55.4" lengthAdjust="spacingAndGlyphs" style="font-size:13.47px;font-family:'Liberation Sans',sans-serif">Hamburg</text>
<text x="1534.6" y="166" fill="#393c44" stroke="#ffffff" stroke-width="1.6" stroke-opacity="0.55" paint-order="stroke" textLength="35.6" lengthAdjust="spacingAndGlyphs" style="font-size:13.92px;font-family:'Liberation Sans',sans-serif">Berlin</text>
<text x="1447.5" y="169.2" fill="#393c44" stroke="#ffffff" stroke-width="1.6" stroke-opacity="0.55" paint-order="stroke" textLength="59.4" lengthAdjust="spacingAndGlyphs" style="font-size:11.62px;font-family:'Liberation Sans',sans-serif">Amsterdam</text>
<text x="1666" y="177.9" fill="#393c44" stroke="#ffffff" stroke-width="1.6" stroke-opacity="0.55" paint-order="stroke" textLength="40.8" lengthAdjust="spacingAndGlyphs" style="font-size:12.04px;font-family:'Liberation Sans',sans-serif">Homyel</text>
<text x="1731.4" y="179.9" fill="#393c44" stroke="#ffffff" stroke-width="1.6" stroke-opacity="0.55" paint-order="stroke" textLength="56.6" lengthAdjust="spacingAndGlyphs" style="font-size:13.40px;font-family:'Liberation Sans',sans-serif">Voronezh</text>
<text x="1799.8" y="173.9" fill="#393c44" stroke="#ffffff" stroke-width="1.6" stroke-opacity="0.55" paint-order="stroke" textLength="37.6" lengthAdjust="spacingAndGlyphs" style="font-size:11.87px;font-family:'Liberation Sans',sans-serif">Lipetsk</text>
<text x="1411.9" y="191.7" fill="#393c44" stroke="#ffffff" stroke-width="1.6" stroke-opacity="0.55" paint-order="stroke" textLength="51.5" lengthAdjust="spacingAndGlyphs" style="font-size:13.83px;font-family:'Liberation Sans',sans-serif">Cologne</text>
<text x="1544.5" y="205.6" fill="#393c44" stroke="#ffffff" stroke-width="1.6" stroke-opacity="0.55" paint-order="stroke" textLength="43.5" lengthAdjust="spacingAndGlyphs" style="font-size:13.49px;font-family:'Liberation Sans',sans-serif">Prague</text>
<text x="1707.6" y="200" fill="#393c44" stroke="#ffffff" stroke-width="1.6" stroke-opacity="0.55" paint-order="stroke" textLength="24.9" lengthAdjust="spacingAndGlyphs" style="font-size:13.18px;font-family:'Liberation Sans',sans-serif">Kyiv</text>
<text x="1765" y="206.8" fill="#393c44" stroke="#ffffff" stroke-width="1.6" stroke-opacity="0.55" paint-order="stroke" textLength="46.7" lengthAdjust="spacingAndGlyphs" style="font-size:14.01px;font-family:'Liberation Sans',sans-serif">Kharkiv</text>
<text x="1486.3" y="214.7" fill="#393c44" stroke="#ffffff" stroke-width="1.6" stroke-opacity="0.55" paint-order="stroke" textLength="48.3" lengthAdjust="spacingAndGlyphs" style="font-size:12.07px;font-family:'Liberation Sans',sans-serif">Frankfurt</text>
<text x="1578.1" y="219.5" fill="#393c44" stroke="#ffffff" stroke-width="1.6" stroke-opacity="0.55" paint-order="stroke" textLength="37.6" lengthAdjust="spacingAndGlyphs" style="font-size:11.09px;font-family:'Liberation Sans',sans-serif">Cracow</text>
<text x="1641.5" y="210.7" fill="#393c44" stroke="#ffffff" stroke-width="1.6" stroke-opacity="0.55" paint-order="stroke" textLength="19.8" lengthAdjust="spacingAndGlyphs" style="font-size:11.13px;font-family:'Liberation Sans',sans-serif">Lviv</text>
<text x="1423" y="224.6" fill="#393c44" stroke="#ffffff" stroke-width="1.6" stroke-opacity="0.55" paint-order="stroke" textLength="30.5" lengthAdjust="spacingAndGlyphs" style="font-size:13.39px;font-family:'Liberation Sans',sans-serif">Paris</text>
<text x="1465.3" y="236.5" fill="#393c44" stroke="#ffffff" stroke-width="1.6" stroke-opacity="0.55" paint-order="stroke" textLength="43.5" lengthAdjust="spacingAndGlyphs" style="font-size:13.49px;font-family:'Liberation Sans',sans-serif">Munich</text>
<text x="1564.3" y="236.5" fill="#393c44" stroke="#ffffff" stroke-width="1.6" stroke-opacity="0.55" paint-order="stroke" textLength="41.6" lengthAdjust="spacingAndGlyphs" style="font-size:13.44px;font-family:'Liberation Sans',sans-serif">Vienna</text>
<text x="1753.1" y="231.7" fill="#393c44" stroke="#ffffff" stroke-width="1.6" stroke-opacity="0.55" paint-order="stroke" textLength="40.8" lengthAdjust="spacingAndGlyphs" style="font-size:13.85px;font-family:'Liberation Sans',sans-serif">Dnipro</text>
<text x="1689.8" y="253.1" fill="#393c44" stroke="#ffffff" stroke-width="1.6" stroke-opacity="0.55" paint-order="stroke" textLength="44.7" lengthAdjust="spacingAndGlyphs" style="font-size:11.49px;font-family:'Liberation Sans',sans-serif">Chisinau</text>
<text x="1490.3" y="267.4" fill="#393c44" stroke="#ffffff" stroke-width="1.6" stroke-opacity="0.55" paint-order="stroke" textLength="48.3" lengthAdjust="spacingAndGlyphs" style="font-size:12.07px;font-family:'Liberation Sans',sans-serif">Ljubljana</text>
<text x="1710.8" y="272.1" fill="#393c44" stroke="#ffffff" stroke-width="1.6" stroke-opacity="0.55" paint-order="stroke" textLength="37.6" lengthAdjust="spacingAndGlyphs" style="font-size:12.76px;font-family:'Liberation Sans',sans-serif">Odesa</text>
<text x="1752.3" y="266.2" fill="#393c44" stroke="#ffffff" stroke-width="1.6" stroke-opacity="0.55" paint-order="stroke" textLength="89.1" lengthAdjust="spacingAndGlyphs" style="font-size:13.25px;font-family:'Liberation Sans',sans-serif">Rostov-on-Don</text>
<text x="1441.6" y="281.2" fill="#393c44" stroke="#ffffff" stroke-width="1.6" stroke-opacity="0.55" paint-order="stroke" textLength="27.7" lengthAdjust="spacingAndGlyphs" style="font-size:12.36px;font-family:'Liberation Sans',sans-serif">Turin</text>
<text x="1663.3" y="299.8" fill="#393c44" stroke="#ffffff" stroke-width="1.6" stroke-opacity="0.55" paint-order="stroke" textLength="61.4" lengthAdjust="spacingAndGlyphs" style="font-size:13.64px;font-family:'Liberation Sans',sans-serif">Bucharest</text>
<text x="1533.8" y="299.8" fill="#393c44" stroke="#ffffff" stroke-width="1.6" stroke-opacity="0.55" paint-order="stroke" textLength="44.3" lengthAdjust="spacingAndGlyphs" style="font-size:11.22px;font-family:'Liberation Sans',sans-serif">Sarajevo</text>
<text x="1783.2" y="315.7" fill="#393c44" stroke="#ffffff" stroke-width="1.6" stroke-opacity="0.55" paint-order="stroke" textLength="28.5" lengthAdjust="spacingAndGlyphs" style="font-size:11.39px;font-family:'Liberation Sans',sans-serif">Sochi</text>
<text x="1451.5" y="305.8" fill="#393c44" stroke="#ffffff" stroke-width="1.6" stroke-opacity="0.55" paint-order="stroke" textLength="47.5" lengthAdjust="spacingAndGlyphs" style="font-size:11.87px;font-family:'Liberation Sans',sans-serif">Marseille</text>
<text x="1405.9" y="315.7" fill="#393c44" stroke="#ffffff" stroke-width="1.6" stroke-opacity="0.55" paint-order="stroke" style="font-size:12px;font-family:'Liberation Sans',sans-serif">louse</text>
<text x="1420.6" y="331.5" fill="#393c44" stroke="#ffffff" stroke-width="1.6" stroke-opacity="0.55" paint-order="stroke" textLength="60.6" lengthAdjust="spacingAndGlyphs" style="font-size:13.46px;font-family:'Liberation Sans',sans-serif">Barcelona</text>
<text x="1524.7" y="325.6" fill="#393c44" stroke="#ffffff" stroke-width="1.6" stroke-opacity="0.55" paint-order="stroke" textLength="33.6" lengthAdjust="spacingAndGlyphs" style="font-size:12.60px;font-family:'Liberation Sans',sans-serif">Rome</text>
<text x="1574.2" y="324.4" fill="#393c44" stroke="#ffffff" stroke-width="1.6" stroke-opacity="0.55" paint-order="stroke" textLength="35.6" lengthAdjust="spacingAndGlyphs" style="font-size:11.64px;font-family:'Liberation Sans',sans-serif">Skopje</text>
<text x="1765" y="333.5" fill="#393c44" stroke="#ffffff" stroke-width="1.6" stroke-opacity="0.55" paint-order="stroke" textLength="40.8" lengthAdjust="spacingAndGlyphs" style="font-size:11.12px;font-family:'Liberation Sans',sans-serif">Samsun</text>
<text x="1521.9" y="353.3" fill="#393c44" stroke="#ffffff" stroke-width="1.6" stroke-opacity="0.55" paint-order="stroke" textLength="34.4" lengthAdjust="spacingAndGlyphs" style="font-size:11.05px;font-family:'Liberation Sans',sans-serif">Naples</text>
<text x="1579.3" y="347.3" fill="#393c44" stroke="#ffffff" stroke-width="1.6" stroke-opacity="0.55" paint-order="stroke" textLength="32.5" lengthAdjust="spacingAndGlyphs" style="font-size:11.62px;font-family:'Liberation Sans',sans-serif">Tirana</text>
<text x="1405.9" y="359.2" fill="#393c44" stroke="#ffffff" stroke-width="1.6" stroke-opacity="0.55" paint-order="stroke" style="font-size:12px;font-family:'Liberation Sans',sans-serif">lencia</text>
<text x="1683" y="353.3" fill="#393c44" stroke="#ffffff" stroke-width="1.6" stroke-opacity="0.55" paint-order="stroke" textLength="41.6" lengthAdjust="spacingAndGlyphs" style="font-size:13.13px;font-family:'Liberation Sans',sans-serif">Ankara</text>
<text x="1792.7" y="359.2" fill="#393c44" stroke="#ffffff" stroke-width="1.6" stroke-opacity="0.55" paint-order="stroke" textLength="48.7" lengthAdjust="spacingAndGlyphs" style="font-size:13.41px;font-family:'Liberation Sans',sans-serif">Yerevan</text>
<text x="1532.6" y="375.8" fill="#393c44" stroke="#ffffff" stroke-width="1.6" stroke-opacity="0.55" paint-order="stroke" textLength="43.5" lengthAdjust="spacingAndGlyphs" style="font-size:11.68px;font-family:'Liberation Sans',sans-serif">Palermo</text>
<text x="1786" y="382.2" fill="#393c44" stroke="#ffffff" stroke-width="1.6" stroke-opacity="0.55" paint-order="stroke" textLength="41.6" lengthAdjust="spacingAndGlyphs" style="font-size:11.88px;font-family:'Liberation Sans',sans-serif">Malatya</text>
<text x="1637.5" y="386.9" fill="#393c44" stroke="#ffffff" stroke-width="1.6" stroke-opacity="0.55" paint-order="stroke" textLength="35.6" lengthAdjust="spacingAndGlyphs" style="font-size:11.44px;font-family:'Liberation Sans',sans-serif">Athens</text>
<text x="1712.7" y="390.1" fill="#393c44" stroke="#ffffff" stroke-width="1.6" stroke-opacity="0.55" paint-order="stroke" textLength="35.6" lengthAdjust="spacingAndGlyphs" style="font-size:12.31px;font-family:'Liberation Sans',sans-serif">Adana</text>
<text x="1657.3" y="401.6" fill="#393c44" stroke="#ffffff" stroke-width="1.6" stroke-opacity="0.55" paint-order="stroke" textLength="45.5" lengthAdjust="spacingAndGlyphs" style="font-size:13.64px;font-family:'Liberation Sans',sans-serif">Antalya</text>
<text x="1724.6" y="406.7" fill="#393c44" stroke="#ffffff" stroke-width="1.6" stroke-opacity="0.55" paint-order="stroke" textLength="41.6" lengthAdjust="spacingAndGlyphs" style="font-size:13.36px;font-family:'Liberation Sans',sans-serif">Aleppo</text>
<text x="1793.9" y="397.6" fill="#393c44" stroke="#ffffff" stroke-width="1.6" stroke-opacity="0.55" paint-order="stroke" textLength="35.6" lengthAdjust="spacingAndGlyphs" style="font-size:13.35px;font-family:'Liberation Sans',sans-serif">Mosul</text>
<text x="1429.7" y="394" fill="#393c44" stroke="#ffffff" stroke-width="1.6" stroke-opacity="0.55" paint-order="stroke" textLength="41.6" lengthAdjust="spacingAndGlyphs" style="font-size:13.61px;font-family:'Liberation Sans',sans-serif">Algiers</text>
<text x="1501" y="392.8" fill="#393c44" stroke="#ffffff" stroke-width="1.6" stroke-opacity="0.55" paint-order="stroke" textLength="27.7" lengthAdjust="spacingAndGlyphs" style="font-size:11.50px;font-family:'Liberation Sans',sans-serif">Tunis</text>
<text x="1429.7" y="411.5" fill="#393c44" stroke="#ffffff" stroke-width="1.6" stroke-opacity="0.55" paint-order="stroke" textLength="63.3" lengthAdjust="spacingAndGlyphs" style="font-size:11.86px;font-family:'Liberation Sans',sans-serif">Constantine</text>
<text x="1807.8" y="417.8" fill="#393c44" stroke="#ffffff" stroke-width="1.6" stroke-opacity="0.55" paint-order="stroke" textLength="33.6" lengthAdjust="spacingAndGlyphs" style="font-size:12.09px;font-family:'Liberation Sans',sans-serif">Kirkuk</text>
<text x="1715.5" y="438.4" fill="#393c44" stroke="#ffffff" stroke-width="1.6" stroke-opacity="0.55" paint-order="stroke" textLength="34.8" lengthAdjust="spacingAndGlyphs" style="font-size:13.32px;font-family:'Liberation Sans',sans-serif">Beirut</text>
<text x="1847.3" y="435.2" fill="#393c44" stroke="#ffffff" stroke-width="1.6" stroke-opacity="0.55" paint-order="stroke" style="font-size:13.5px;font-family:'Liberation Sans',sans-serif">Baghdad</text>
<text x="1532.6" y="440.4" fill="#393c44" stroke="#ffffff" stroke-width="1.6" stroke-opacity="0.55" paint-order="stroke" textLength="37.6" lengthAdjust="spacingAndGlyphs" style="font-size:14.00px;font-family:'Liberation Sans',sans-serif">Tripoli</text>
<text x="1763" y="451" fill="#393c44" stroke="#ffffff" stroke-width="1.6" stroke-opacity="0.55" paint-order="stroke" textLength="44.7" lengthAdjust="spacingAndGlyphs" style="font-size:12.97px;font-family:'Liberation Sans',sans-serif">Amman</text>
<text x="1694.9" y="454.2" fill="#393c44" stroke="#ffffff" stroke-width="1.6" stroke-opacity="0.55" paint-order="stroke" textLength="53.4" lengthAdjust="spacingAndGlyphs" style="font-size:11.58px;font-family:'Liberation Sans',sans-serif">Jerusalem</text>
<text x="1548.5" y="460.2" fill="#393c44" stroke="#ffffff" stroke-width="1.6" stroke-opacity="0.55" paint-order="stroke" textLength="47.5" lengthAdjust="spacingAndGlyphs" style="font-size:11.39px;font-family:'Liberation Sans',sans-serif">Benghazi</text>
<text x="1629.6" y="472" fill="#393c44" stroke="#ffffff" stroke-width="1.6" stroke-opacity="0.55" paint-order="stroke" textLength="65.3" lengthAdjust="spacingAndGlyphs" style="font-size:13.82px;font-family:'Liberation Sans',sans-serif">Alexandria</text>
<text x="1714.7" y="474.8" fill="#393c44" stroke="#ffffff" stroke-width="1.6" stroke-opacity="0.55" paint-order="stroke" textLength="31.7" lengthAdjust="spacingAndGlyphs" style="font-size:13.27px;font-family:'Liberation Sans',sans-serif">Cairo</text>
<text x="1712.7" y="491" fill="#393c44" stroke="#ffffff" stroke-width="1.6" stroke-opacity="0.55" paint-order="stroke" textLength="45.5" lengthAdjust="spacingAndGlyphs" style="font-size:11.48px;font-family:'Liberation Sans',sans-serif">El Wasta</text>
<text x="1768.2" y="493.8" fill="#393c44" stroke="#ffffff" stroke-width="1.6" stroke-opacity="0.55" paint-order="stroke" textLength="37.6" lengthAdjust="spacingAndGlyphs" style="font-size:11.66px;font-family:'Liberation Sans',sans-serif">Tabouk</text>
<text x="1821.6" y="503.7" fill="#393c44" stroke="#ffffff" stroke-width="1.6" stroke-opacity="0.55" paint-order="stroke" textLength="17.8" lengthAdjust="spacingAndGlyphs" style="font-size:10.33px;font-family:'Liberation Sans',sans-serif">Hail</text>
<text x="1786" y="517.6" fill="#393c44" stroke="#ffffff" stroke-width="1.6" stroke-opacity="0.55" paint-order="stroke" textLength="49.5" lengthAdjust="spacingAndGlyphs" style="font-size:11.56px;font-family:'Liberation Sans',sans-serif">Buraydah</text>
<text x="1857.2" y="515.6" fill="#393c44" stroke="#ffffff" stroke-width="1.6" stroke-opacity="0.55" paint-order="stroke" style="font-size:12px;font-family:'Liberation Sans',sans-serif">Al Q</text>
<text x="1742.4" y="539.3" fill="#393c44" stroke="#ffffff" stroke-width="1.6" stroke-opacity="0.55" paint-order="stroke" textLength="50.6" lengthAdjust="spacingAndGlyphs" style="font-size:13.19px;font-family:'Liberation Sans',sans-serif">Madinah</text>
<text x="1749.3" y="583.1" fill="#393c44" stroke="#ffffff" stroke-width="1.6" stroke-opacity="0.55" paint-order="stroke" textLength="45.8" lengthAdjust="spacingAndGlyphs" style="font-size:13.08px;font-family:'Liberation Sans',sans-serif">Makkah</text>
<text x="1787" y="614.3" fill="#393c44" stroke="#ffffff" stroke-width="1.6" stroke-opacity="0.55" paint-order="stroke" textLength="36.5" lengthAdjust="spacingAndGlyphs" style="font-size:10.95px;font-family:'Liberation Sans',sans-serif">Khamis</text>
<text x="1780.9" y="626.4" fill="#393c44" stroke="#ffffff" stroke-width="1.6" stroke-opacity="0.55" paint-order="stroke" textLength="44.6" lengthAdjust="spacingAndGlyphs" style="font-size:11.80px;font-family:'Liberation Sans',sans-serif">Moshayt</text>
<text x="1661.3" y="633.7" fill="#393c44" stroke="#ffffff" stroke-width="1.6" stroke-opacity="0.55" paint-order="stroke" textLength="59.6" lengthAdjust="spacingAndGlyphs" style="font-size:13.75px;font-family:'Liberation Sans',sans-serif">Khartoum</text>
<text x="1823.4" y="651.9" fill="#393c44" stroke="#ffffff" stroke-width="1.6" stroke-opacity="0.55" paint-order="stroke" textLength="38.5" lengthAdjust="spacingAndGlyphs" style="font-size:12.49px;font-family:'Liberation Sans',sans-serif">Sana'a</text>
<text x="1419.4" y="656.8" fill="#393c44" stroke="#ffffff" stroke-width="1.6" stroke-opacity="0.55" paint-order="stroke" textLength="39.3" lengthAdjust="spacingAndGlyphs" style="font-size:11.59px;font-family:'Liberation Sans',sans-serif">Niamey</text>
<text x="1549.9" y="670.2" fill="#393c44" stroke="#ffffff" stroke-width="1.6" stroke-opacity="0.55" paint-order="stroke" textLength="56.7" lengthAdjust="spacingAndGlyphs" style="font-size:11.54px;font-family:'Liberation Sans',sans-serif">N'Djamena</text>
<text x="1650" y="671" fill="#393c44" stroke="#ffffff" stroke-width="1.6" stroke-opacity="0.55" paint-order="stroke" textLength="28.8" lengthAdjust="spacingAndGlyphs" style="font-size:11.27px;font-family:'Liberation Sans',sans-serif">Nyala</text>
<text x="1429.2" y="675" fill="#393c44" stroke="#ffffff" stroke-width="1.6" stroke-opacity="0.55" paint-order="stroke" textLength="37.7" lengthAdjust="spacingAndGlyphs" style="font-size:12.11px;font-family:'Liberation Sans',sans-serif">Sokoto</text>
<text x="1853.8" y="672.2" fill="#393c44" stroke="#ffffff" stroke-width="1.6" stroke-opacity="0.55" paint-order="stroke" style="font-size:12px;font-family:'Liberation Sans',sans-serif">Adan</text>
<text x="1485.1" y="671" fill="#393c44" stroke="#ffffff" stroke-width="1.6" stroke-opacity="0.55" paint-order="stroke" textLength="28.4" lengthAdjust="spacingAndGlyphs" style="font-size:12.16px;font-family:'Liberation Sans',sans-serif">Kano</text>
<text x="1475" y="697.3" fill="#393c44" stroke="#ffffff" stroke-width="1.6" stroke-opacity="0.55" paint-order="stroke" textLength="44.6" lengthAdjust="spacingAndGlyphs" style="font-size:12.94px;font-family:'Liberation Sans',sans-serif">Kaduna</text>
<text x="1791" y="688.4" fill="#393c44" stroke="#ffffff" stroke-width="1.6" stroke-opacity="0.55" paint-order="stroke" textLength="34.4" lengthAdjust="spacingAndGlyphs" style="font-size:13.75px;font-family:'Liberation Sans',sans-serif">Addis</text>
<text x="1791" y="701.8" fill="#393c44" stroke="#ffffff" stroke-width="1.6" stroke-opacity="0.55" paint-order="stroke" textLength="38.5" lengthAdjust="spacingAndGlyphs" style="font-size:13.32px;font-family:'Liberation Sans',sans-serif">Ababa</text>
<text x="1410.1" y="724.9" fill="#393c44" stroke="#ffffff" stroke-width="1.6" stroke-opacity="0.55" paint-order="stroke" textLength="14.2" lengthAdjust="spacingAndGlyphs" style="font-size:12.77px;font-family:'Liberation Sans',sans-serif">Ifo</text>
<text x="1410.1" y="741" fill="#393c44" stroke="#ffffff" stroke-width="1.6" stroke-opacity="0.55" paint-order="stroke" style="font-size:13.5px;font-family:'Liberation Sans',sans-serif">Lo</text>
<text x="1454.7" y="743.1" fill="#393c44" stroke="#ffffff" stroke-width="1.6" stroke-opacity="0.55" paint-order="stroke" textLength="32.4" lengthAdjust="spacingAndGlyphs" style="font-size:11.21px;font-family:'Liberation Sans',sans-serif">Enugu</text>
<text x="1718" y="754.5" fill="#393c44" stroke="#ffffff" stroke-width="1.6" stroke-opacity="0.55" paint-order="stroke" textLength="22.3" lengthAdjust="spacingAndGlyphs" style="font-size:10.28px;font-family:'Liberation Sans',sans-serif">Juba</text>
<text x="1447.8" y="763.4" fill="#393c44" stroke="#ffffff" stroke-width="1.6" stroke-opacity="0.55" paint-order="stroke" textLength="42.1" lengthAdjust="spacingAndGlyphs" style="font-size:13.29px;font-family:'Liberation Sans',sans-serif">Douala</text>
<text x="1515.5" y="765.4" fill="#393c44" stroke="#ffffff" stroke-width="1.6" stroke-opacity="0.55" paint-order="stroke" textLength="52.7" lengthAdjust="spacingAndGlyphs" style="font-size:13.41px;font-family:'Liberation Sans',sans-serif">Yaounde</text>
<text x="1857.9" y="783.6" fill="#393c44" stroke="#ffffff" stroke-width="1.6" stroke-opacity="0.55" paint-order="stroke" style="font-size:13.5px;font-family:'Liberation Sans',sans-serif">Mog</text>
<text x="1438.5" y="790.9" fill="#393c44" stroke="#ffffff" stroke-width="1.6" stroke-opacity="0.55" paint-order="stroke" textLength="48.6" lengthAdjust="spacingAndGlyphs" style="font-size:12.32px;font-family:'Liberation Sans',sans-serif">Libreville</text>
<text x="1699.8" y="805.9" fill="#393c44" stroke="#ffffff" stroke-width="1.6" stroke-opacity="0.55" paint-order="stroke" textLength="51.9" lengthAdjust="spacingAndGlyphs" style="font-size:13.15px;font-family:'Liberation Sans',sans-serif">Kampala</text>
<text x="1772" y="807.1" fill="#393c44" stroke="#ffffff" stroke-width="1.6" stroke-opacity="0.55" paint-order="stroke" textLength="43.4" lengthAdjust="spacingAndGlyphs" style="font-size:13.70px;font-family:'Liberation Sans',sans-serif">Nairobi</text>
<text x="1703.1" y="824.1" fill="#393c44" stroke="#ffffff" stroke-width="1.6" stroke-opacity="0.55" paint-order="stroke" textLength="35.3" lengthAdjust="spacingAndGlyphs" style="font-size:14.43px;font-family:'Liberation Sans',sans-serif">Kigali</text>
<text x="1701" y="837.1" fill="#393c44" stroke="#ffffff" stroke-width="1.6" stroke-opacity="0.55" paint-order="stroke" textLength="34.4" lengthAdjust="spacingAndGlyphs" style="font-size:11.68px;font-family:'Liberation Sans',sans-serif">Gitega</text>
<text x="1493.2" y="837.1" fill="#393c44" stroke="#ffffff" stroke-width="1.6" stroke-opacity="0.55" paint-order="stroke" textLength="53.5" lengthAdjust="spacingAndGlyphs" style="font-size:13.01px;font-family:'Liberation Sans',sans-serif">Kinshasa</text>
<text x="1799.1" y="835.5" fill="#393c44" stroke="#ffffff" stroke-width="1.6" stroke-opacity="0.55" paint-order="stroke" textLength="50.6" lengthAdjust="spacingAndGlyphs" style="font-size:11.53px;font-family:'Liberation Sans',sans-serif">Mombasa</text>
<text x="1477.8" y="851.7" fill="#393c44" stroke="#ffffff" stroke-width="1.6" stroke-opacity="0.55" paint-order="stroke" textLength="36.5" lengthAdjust="spacingAndGlyphs" style="font-size:12.87px;font-family:'Liberation Sans',sans-serif">Pointe</text>
<text x="1483.1" y="863.5" fill="#393c44" stroke="#ffffff" stroke-width="1.6" stroke-opacity="0.55" paint-order="stroke" textLength="30.4" lengthAdjust="spacingAndGlyphs" style="font-size:12.72px;font-family:'Liberation Sans',sans-serif">Noire</text>
<text x="1797.1" y="872.8" fill="#393c44" stroke="#ffffff" stroke-width="1.6" stroke-opacity="0.55" paint-order="stroke" textLength="38.5" lengthAdjust="spacingAndGlyphs" style="font-size:13.07px;font-family:'Liberation Sans',sans-serif">Dar es</text>
<text x="1796.3" y="885.7" fill="#393c44" stroke="#ffffff" stroke-width="1.6" stroke-opacity="0.55" paint-order="stroke" textLength="43.4" lengthAdjust="spacingAndGlyphs" style="font-size:12.80px;font-family:'Liberation Sans',sans-serif">Salaam</text>
<text x="1533.7" y="881.7" fill="#393c44" stroke="#ffffff" stroke-width="1.6" stroke-opacity="0.55" paint-order="stroke" textLength="43.4" lengthAdjust="spacingAndGlyphs" style="font-size:13.01px;font-family:'Liberation Sans',sans-serif">Luanda</text>
<text x="1475.2" y="117.7" fill="#a2a6ad" textLength="43.5" lengthAdjust="spacingAndGlyphs" style="font-size:8.70px;font-family:'Liberation Sans',sans-serif">DENMARK</text>
<text x="1639.5" y="103.9" fill="#a2a6ad" textLength="29.7" lengthAdjust="spacingAndGlyphs" style="font-size:8.81px;font-family:'Liberation Sans',sans-serif">LATVIA</text>
<text x="1607.8" y="121.7" fill="#a2a6ad" textLength="47.5" lengthAdjust="spacingAndGlyphs" style="font-size:9.09px;font-family:'Liberation Sans',sans-serif">LITHUANIA</text>
<text x="1651.4" y="165.2" fill="#a2a6ad" textLength="49.5" lengthAdjust="spacingAndGlyphs" style="font-size:10.60px;font-family:'Liberation Sans',sans-serif">BELARUS</text>
<text x="1750.4" y="157.3" fill="#a2a6ad" textLength="53.4" lengthAdjust="spacingAndGlyphs" style="font-size:8.56px;font-family:'Liberation Sans',sans-serif">CENTRAL FD</text>
<text x="1556.4" y="181.8" fill="#a2a6ad" textLength="45.5" lengthAdjust="spacingAndGlyphs" style="font-size:11.06px;font-family:'Liberation Sans',sans-serif">POLAND</text>
<text x="1475.2" y="196.1" fill="#a2a6ad" textLength="53.4" lengthAdjust="spacingAndGlyphs" style="font-size:10.56px;font-family:'Liberation Sans',sans-serif">GERMANY</text>
<text x="1691" y="230.5" fill="#a2a6ad" textLength="49.5" lengthAdjust="spacingAndGlyphs" style="font-size:11.13px;font-family:'Liberation Sans',sans-serif">UKRAINE</text>
<text x="1528.7" y="250.3" fill="#a2a6ad" textLength="35.6" lengthAdjust="spacingAndGlyphs" style="font-size:8.21px;font-family:'Liberation Sans',sans-serif">AUSTRIA</text>
<text x="1803.8" y="246.4" fill="#a2a6ad" style="font-size:11px;letter-spacing:0.5px;font-family:'Liberation Sans',sans-serif">SOUTHERN</text>
<text x="1406" y="265" fill="#a2a6ad" style="font-size:12.5px;letter-spacing:0.5px;font-family:'Liberation Sans',sans-serif">FRANCE</text>
<text x="1566.3" y="262.2" fill="#a2a6ad" textLength="43.5" lengthAdjust="spacingAndGlyphs" style="font-size:8.73px;font-family:'Liberation Sans',sans-serif">HUNGARY</text>
<text x="1620.9" y="275.3" fill="#a2a6ad" textLength="52.3" lengthAdjust="spacingAndGlyphs" style="font-size:11.21px;font-family:'Liberation Sans',sans-serif">ROMANIA</text>
<text x="1490.3" y="286" fill="#a2a6ad" textLength="28.5" lengthAdjust="spacingAndGlyphs" style="font-size:10.84px;font-family:'Liberation Sans',sans-serif">ITALY</text>
<text x="1542.5" y="284" fill="#a2a6ad" textLength="41.6" lengthAdjust="spacingAndGlyphs" style="font-size:9.52px;font-family:'Liberation Sans',sans-serif">CROATIA</text>
<text x="1590" y="299.8" fill="#a2a6ad" textLength="31.7" lengthAdjust="spacingAndGlyphs" style="font-size:8.64px;font-family:'Liberation Sans',sans-serif">SERBIA</text>
<text x="1628.8" y="321.6" fill="#a2a6ad" textLength="44.3" lengthAdjust="spacingAndGlyphs" style="font-size:8.76px;font-family:'Liberation Sans',sans-serif">BULGARIA</text>
<text x="1817.7" y="330.7" fill="#a2a6ad" style="font-size:11px;letter-spacing:0.5px;font-family:'Liberation Sans',sans-serif">GEOR</text>
<text x="1744.4" y="365.1" fill="#a2a6ad" textLength="47.5" lengthAdjust="spacingAndGlyphs" style="font-size:10.96px;font-family:'Liberation Sans',sans-serif">TURKIYE</text>
<text x="1597.9" y="370.3" fill="#a2a6ad" textLength="41.6" lengthAdjust="spacingAndGlyphs" style="font-size:9.85px;font-family:'Liberation Sans',sans-serif">GREECE</text>
<text x="1714.7" y="420.6" fill="#a2a6ad" textLength="33.6" lengthAdjust="spacingAndGlyphs" style="font-size:8.06px;font-family:'Liberation Sans',sans-serif">CYPRUS</text>
<text x="1772.1" y="426.5" fill="#a2a6ad" textLength="29.7" lengthAdjust="spacingAndGlyphs" style="font-size:9.90px;font-family:'Liberation Sans',sans-serif">SYRIA</text>
<text x="1478" y="447.1" fill="#a2a6ad" textLength="34.8" lengthAdjust="spacingAndGlyphs" style="font-size:8.82px;font-family:'Liberation Sans',sans-serif">TUNISIA</text>
<text x="1811.7" y="445.5" fill="#a2a6ad" textLength="27.7" lengthAdjust="spacingAndGlyphs" style="font-size:11.33px;font-family:'Liberation Sans',sans-serif">IRAQ</text>
<text x="1406" y="504.9" fill="#a2a6ad" style="font-size:12.5px;letter-spacing:0.5px;font-family:'Liberation Sans',sans-serif">ALGERIA</text>
<text x="1562.3" y="515.6" fill="#a2a6ad" textLength="27.7" lengthAdjust="spacingAndGlyphs" style="font-size:10.03px;font-family:'Liberation Sans',sans-serif">LIBYA</text>
<text x="1678.8" y="522.3" fill="#a2a6ad" textLength="37.3" lengthAdjust="spacingAndGlyphs" style="font-size:11.00px;font-family:'Liberation Sans',sans-serif">EGYPT</text>
<text x="1821.4" y="570.9" fill="#a2a6ad" style="font-size:12.5px;letter-spacing:0.5px;font-family:'Liberation Sans',sans-serif">SAUDI ARA</text>
<text x="1472.1" y="622.4" fill="#a2a6ad" textLength="34" lengthAdjust="spacingAndGlyphs" style="font-size:10.74px;font-family:'Liberation Sans',sans-serif">NIGER</text>
<text x="1570.2" y="639.8" fill="#a2a6ad" textLength="30.4" lengthAdjust="spacingAndGlyphs" style="font-size:10.73px;font-family:'Liberation Sans',sans-serif">CHAD</text>
<text x="1764.7" y="644.7" fill="#a2a6ad" textLength="36.5" lengthAdjust="spacingAndGlyphs" style="font-size:8.42px;font-family:'Liberation Sans',sans-serif">ERITREA</text>
<text x="1684.8" y="658.8" fill="#a2a6ad" textLength="40" lengthAdjust="spacingAndGlyphs" style="font-size:11.43px;font-family:'Liberation Sans',sans-serif">SUDAN</text>
<text x="1406.1" y="692.5" fill="#a2a6ad" textLength="26.3" lengthAdjust="spacingAndGlyphs" style="font-size:8.61px;font-family:'Liberation Sans',sans-serif">BENIN</text>
<text x="1444.6" y="717.6" fill="#a2a6ad" textLength="44.6" lengthAdjust="spacingAndGlyphs" style="font-size:10.85px;font-family:'Liberation Sans',sans-serif">NIGERIA</text>
<text x="1582.3" y="727.7" fill="#a2a6ad" textLength="39.7" lengthAdjust="spacingAndGlyphs" style="font-size:8.51px;font-family:'Liberation Sans',sans-serif">CENTRAL</text>
<text x="1560.9" y="737.8" fill="#a2a6ad" textLength="83.5" lengthAdjust="spacingAndGlyphs" style="font-size:8.64px;font-family:'Liberation Sans',sans-serif">AFRICAN REPUBLIC</text>
<text x="1770.7" y="728.9" fill="#a2a6ad" textLength="52.7" lengthAdjust="spacingAndGlyphs" style="font-size:11.29px;font-family:'Liberation Sans',sans-serif">ETHIOPIA</text>
<text x="1683.6" y="722.9" fill="#a2a6ad" textLength="40.5" lengthAdjust="spacingAndGlyphs" style="font-size:11.57px;font-family:'Liberation Sans',sans-serif">SOUTH</text>
<text x="1683.6" y="735.8" fill="#a2a6ad" textLength="40" lengthAdjust="spacingAndGlyphs" style="font-size:11.43px;font-family:'Liberation Sans',sans-serif">SUDAN</text>
<text x="1491.2" y="745.1" fill="#a2a6ad" textLength="50.6" lengthAdjust="spacingAndGlyphs" style="font-size:8.59px;font-family:'Liberation Sans',sans-serif">CAMEROON</text>
<text x="1831.5" y="767.4" fill="#a2a6ad" textLength="48.6" lengthAdjust="spacingAndGlyphs" style="font-size:10.93px;font-family:'Liberation Sans',sans-serif">SOMALIA</text>
<text x="1707.9" y="785.7" fill="#a2a6ad" textLength="36.5" lengthAdjust="spacingAndGlyphs" style="font-size:8.53px;font-family:'Liberation Sans',sans-serif">UGANDA</text>
<text x="1760.6" y="789.7" fill="#a2a6ad" textLength="36.5" lengthAdjust="spacingAndGlyphs" style="font-size:11.01px;font-family:'Liberation Sans',sans-serif">KENYA</text>
<text x="1539.8" y="798.6" fill="#a2a6ad" textLength="32.4" lengthAdjust="spacingAndGlyphs" style="font-size:8.58px;font-family:'Liberation Sans',sans-serif">CONGO</text>
<text x="1493.2" y="811.2" fill="#a2a6ad" textLength="38.5" lengthAdjust="spacingAndGlyphs" style="font-size:10.66px;font-family:'Liberation Sans',sans-serif">GABON</text>
<text x="1593.7" y="807.1" fill="#a2a6ad" textLength="73.7" lengthAdjust="spacingAndGlyphs" style="font-size:11.09px;font-family:'Liberation Sans',sans-serif">DEMOCRATIC</text>
<text x="1601.8" y="820.1" fill="#a2a6ad" textLength="56.3" lengthAdjust="spacingAndGlyphs" style="font-size:11.26px;font-family:'Liberation Sans',sans-serif">REPUBLIC</text>
<text x="1587.2" y="833.5" fill="#a2a6ad" textLength="85.1" lengthAdjust="spacingAndGlyphs" style="font-size:11.05px;font-family:'Liberation Sans',sans-serif">OF THE CONGO</text>
<text x="1738.3" y="866.7" fill="#a2a6ad" textLength="32.4" lengthAdjust="spacingAndGlyphs" style="font-size:8.70px;font-family:'Liberation Sans',sans-serif">UNITED</text>
<text x="1725.4" y="876.8" fill="#a2a6ad" textLength="57.5" lengthAdjust="spacingAndGlyphs" style="font-size:8.62px;font-family:'Liberation Sans',sans-serif">REPUBLIC OF</text>
<text x="1732.3" y="886.9" fill="#a2a6ad" textLength="44.6" lengthAdjust="spacingAndGlyphs" style="font-size:9.16px;font-family:'Liberation Sans',sans-serif">TANZANIA</text>
<text x="1556" y="919.4" fill="#a2a6ad" textLength="46.6" lengthAdjust="spacingAndGlyphs" style="font-size:11.18px;font-family:'Liberation Sans',sans-serif">ANGOLA</text>
<text x="1413.9" y="101.9" fill="#6aa3e3" style="font-size:11px;font-style:italic;letter-spacing:1px;font-family:'Liberation Sans',sans-serif">North</text>
<text x="1419.8" y="113" fill="#6aa3e3" style="font-size:11px;font-style:italic;letter-spacing:1px;font-family:'Liberation Sans',sans-serif">Sea</text>
<text x="1716.7" y="313.7" fill="#6aa3e3" textLength="49.5" lengthAdjust="spacingAndGlyphs" style="font-size:11px;font-style:italic;font-family:'Liberation Sans',sans-serif">Black Sea</text>
<text x="1527.9" y="422.5" fill="#6aa3e3" textLength="97.8" lengthAdjust="spacingAndGlyphs" style="font-size:11px;font-style:italic;font-family:'Liberation Sans',sans-serif">Mediterranean Sea</text>
<rect x="1772" y="111" width="4" height="4" fill="#c42f6a"/>
<rect x="1674" y="144" width="4" height="4" fill="#c42f6a"/>
<rect x="1650" y="130" width="4" height="4" fill="#c42f6a"/>
<rect x="1701" y="201" width="4" height="4" fill="#c42f6a"/>
<rect x="1528" y="162" width="4" height="4" fill="#c42f6a"/>
<rect x="1442" y="167" width="4" height="4" fill="#c42f6a"/>
<rect x="1417" y="225" width="4" height="4" fill="#c42f6a"/>
<rect x="1538" y="206" width="4" height="4" fill="#c42f6a"/>
<rect x="1560" y="237" width="4" height="4" fill="#c42f6a"/>
<rect x="1540" y="266" width="4" height="4" fill="#c42f6a"/>
<rect x="1657" y="301" width="4" height="4" fill="#c42f6a"/>
<rect x="1684" y="253" width="4" height="4" fill="#c42f6a"/>
<rect x="1580" y="300" width="4" height="4" fill="#c42f6a"/>
<rect x="1519" y="324" width="4" height="4" fill="#c42f6a"/>
<rect x="1610" y="320" width="4" height="4" fill="#c42f6a"/>
<rect x="1595" y="328" width="4" height="4" fill="#c42f6a"/>
<rect x="1632" y="379" width="4" height="4" fill="#c42f6a"/>
<rect x="1689" y="353" width="4" height="4" fill="#c42f6a"/>
<rect x="1423" y="394" width="4" height="4" fill="#c42f6a"/>
<rect x="1495" y="392" width="4" height="4" fill="#c42f6a"/>
<rect x="1526" y="442" width="4" height="4" fill="#c42f6a"/>
<rect x="1747" y="429" width="4" height="4" fill="#c42f6a"/>
<rect x="1761" y="450" width="4" height="4" fill="#c42f6a"/>
<rect x="1748" y="454" width="4" height="4" fill="#c42f6a"/>
<rect x="1709" y="474" width="4" height="4" fill="#c42f6a"/>
<rect x="1696" y="634" width="4" height="4" fill="#c42f6a"/>
<rect x="1841" y="644" width="4" height="4" fill="#c42f6a"/>
<rect x="1786" y="702" width="4" height="4" fill="#c42f6a"/>
<rect x="1550" y="671" width="4" height="4" fill="#c42f6a"/>
<rect x="1414" y="658" width="4" height="4" fill="#c42f6a"/>
<rect x="1508" y="755" width="4" height="4" fill="#c42f6a"/>
<rect x="1487" y="790" width="4" height="4" fill="#c42f6a"/>
<rect x="1545" y="841" width="4" height="4" fill="#c42f6a"/>
<rect x="1525" y="884" width="4" height="4" fill="#c42f6a"/>
<rect x="1723" y="785" width="4" height="4" fill="#c42f6a"/>
<rect x="1766" y="808" width="4" height="4" fill="#c42f6a"/>
<rect x="1696" y="814" width="4" height="4" fill="#c42f6a"/>
<rect x="1695" y="829" width="4" height="4" fill="#c42f6a"/>
<rect x="1714" y="745" width="4" height="4" fill="#c42f6a"/>
<rect x="1853" y="774" width="4" height="4" fill="#c42f6a"/>
<rect x="1851" y="439" width="4" height="4" fill="#c42f6a"/>
<rect x="1810" y="365" width="4" height="4" fill="#c42f6a"/>
<rect x="1855" y="533" width="4" height="4" fill="#c42f6a"/>
<rect x="1778.2" y="102.2" width="3.6" height="3.6" fill="#6b7083"/>
<rect x="1498.2" y="151.2" width="3.6" height="3.6" fill="#6b7083"/>
<rect x="1562.2" y="138.2" width="3.6" height="3.6" fill="#6b7083"/>
<rect x="1748.2" y="139.2" width="3.6" height="3.6" fill="#6b7083"/>
<rect x="1797.2" y="132.2" width="3.6" height="3.6" fill="#6b7083"/>
<rect x="1664.2" y="170.2" width="3.6" height="3.6" fill="#6b7083"/>
<rect x="1730.2" y="181.2" width="3.6" height="3.6" fill="#6b7083"/>
<rect x="1798.2" y="169.2" width="3.6" height="3.6" fill="#6b7083"/>
<rect x="1422.2" y="192.2" width="3.6" height="3.6" fill="#6b7083"/>
<rect x="1484.2" y="210.2" width="3.6" height="3.6" fill="#6b7083"/>
<rect x="1576.2" y="212.2" width="3.6" height="3.6" fill="#6b7083"/>
<rect x="1640.2" y="212.2" width="3.6" height="3.6" fill="#6b7083"/>
<rect x="1460.2" y="238.2" width="3.6" height="3.6" fill="#6b7083"/>
<rect x="1751.2" y="234.2" width="3.6" height="3.6" fill="#6b7083"/>
<rect x="1704.2" y="272.2" width="3.6" height="3.6" fill="#6b7083"/>
<rect x="1800.2" y="256.2" width="3.6" height="3.6" fill="#6b7083"/>
<rect x="1436.2" y="282.2" width="3.6" height="3.6" fill="#6b7083"/>
<rect x="1448.2" y="305.2" width="3.6" height="3.6" fill="#6b7083"/>
<rect x="1409.2" y="316.2" width="3.6" height="3.6" fill="#6b7083"/>
<rect x="1415.2" y="331.2" width="3.6" height="3.6" fill="#6b7083"/>
<rect x="1520.2" y="347.2" width="3.6" height="3.6" fill="#6b7083"/>
<rect x="1798.2" y="315.2" width="3.6" height="3.6" fill="#6b7083"/>
<rect x="1761.2" y="335.2" width="3.6" height="3.6" fill="#6b7083"/>
<rect x="1708.2" y="391.2" width="3.6" height="3.6" fill="#6b7083"/>
<rect x="1655.2" y="392.2" width="3.6" height="3.6" fill="#6b7083"/>
<rect x="1724.2" y="400.2" width="3.6" height="3.6" fill="#6b7083"/>
<rect x="1788.2" y="390.2" width="3.6" height="3.6" fill="#6b7083"/>
<rect x="1445.2" y="410.2" width="3.6" height="3.6" fill="#6b7083"/>
<rect x="1798.2" y="410.2" width="3.6" height="3.6" fill="#6b7083"/>
<rect x="1698.2" y="451.2" width="3.6" height="3.6" fill="#6b7083"/>
<rect x="1548.2" y="456.2" width="3.6" height="3.6" fill="#6b7083"/>
<rect x="1704.2" y="476.2" width="3.6" height="3.6" fill="#6b7083"/>
<rect x="1710.2" y="485.2" width="3.6" height="3.6" fill="#6b7083"/>
<rect x="1763.2" y="495.2" width="3.6" height="3.6" fill="#6b7083"/>
<rect x="1820.2" y="500.2" width="3.6" height="3.6" fill="#6b7083"/>
<rect x="1801.2" y="517.2" width="3.6" height="3.6" fill="#6b7083"/>
<rect x="1744.2" y="539.2" width="3.6" height="3.6" fill="#6b7083"/>
<rect x="1745.2" y="570.2" width="3.6" height="3.6" fill="#6b7083"/>
<rect x="1785.2" y="604.2" width="3.6" height="3.6" fill="#6b7083"/>
<rect x="1649.2" y="673.2" width="3.6" height="3.6" fill="#6b7083"/>
<rect x="1423.2" y="673.2" width="3.6" height="3.6" fill="#6b7083"/>
<rect x="1481.2" y="671.2" width="3.6" height="3.6" fill="#6b7083"/>
<rect x="1471.2" y="698.2" width="3.6" height="3.6" fill="#6b7083"/>
<rect x="1810.2" y="830.2" width="3.6" height="3.6" fill="#6b7083"/>
<rect x="1794.2" y="865.2" width="3.6" height="3.6" fill="#6b7083"/>
<rect x="1477.2" y="844.2" width="3.6" height="3.6" fill="#6b7083"/>
<rect x="1453.2" y="738.2" width="3.6" height="3.6" fill="#6b7083"/>
<path d="M1435.4,754.7 C1431,748 1427.7,744 1427.7,740.5 A7.7,7.7 0 1 1 1443.1,740.5 C1443.1,744 1440,748 1435.4,754.7 Z" fill="#000"/>
<path d="M1405,786 C1400,779 1396,775 1396,771 A8.3,8.3 0 1 1 1412.6,771 C1412.6,775 1410,779 1405,786 Z" fill="#fff" fill-opacity="0.3" stroke="#000" stroke-width="1.6"/>
<text x="1421.5" y="780" fill="#000" stroke="#fff" stroke-width="3" paint-order="stroke" textLength="27.8" lengthAdjust="spacingAndGlyphs" style="font-size:16px;font-family:'Liberation Sans',sans-serif">End</text>
<text x="1388.4" y="809.8" fill="#000" stroke="#fff" stroke-width="3" paint-order="stroke" style="font-size:17px;font-family:'Liberation Sans',sans-serif">Start</text>
<rect x="1415.5" y="900.5" width="50" height="20" fill="#e6f2fc" fill-opacity="0.9" stroke="#999" stroke-width="0.6"/>
<polyline points="1415.8,900 1415.8,920.3 1465.2,920.3 1465.2,900" fill="none" stroke="#222" stroke-width="1.8"/>
<text x="1421" y="913.5" fill="#222" style="font-size:9px;font-family:'Liberation Sans',sans-serif">500 km</text>
<circle cx="1857.5" cy="913.5" r="12" fill="#fff" fill-opacity="0.85"/>
<circle cx="1857.5" cy="913.5" r="9" fill="#000"/>
<circle cx="1857.5" cy="908.6" r="1.5" fill="#fff"/>
<rect x="1856.2" y="911" width="2.6" height="7" fill="#fff"/>
<rect x="1855" y="911" width="2.5" height="1.2" fill="#fff"/>
<rect x="1855" y="917" width="5" height="1.2" fill="#fff"/>
<rect x="1841" y="105.4" width="29.3" height="28.8" rx="4.5" fill="#fff" stroke="#cfd6cf" stroke-width="2"/>
<rect x="1841" y="143.8" width="29.3" height="87.1" rx="4.5" fill="#fff" stroke="#cfd6cf" stroke-width="2"/>
<line x1="1841.5" y1="173.3" x2="1870" y2="173.3" stroke="#dedede" stroke-width="1"/>
<line x1="1841.5" y1="202.6" x2="1870" y2="202.6" stroke="#dedede" stroke-width="1"/>
<rect x="1841" y="240.8" width="29.3" height="58.1" rx="4.5" fill="#fff" stroke="#cfd6cf" stroke-width="2"/>
<line x1="1841.5" y1="270.5" x2="1870" y2="270.5" stroke="#dedede" stroke-width="1"/>
<rect x="1841" y="308.8" width="29.3" height="29.2" rx="4.5" fill="#fff" stroke="#cfd6cf" stroke-width="2"/>
<circle cx="1855.4" cy="119.2" r="6.6" fill="#fff" stroke="#111" stroke-width="1"/>
<path d="M1854.2,116.2 L1857.1,113.3 L1860.8,115.5 L1861.9,118.4 L1860.4,119.5 L1857.8,118.4 L1855.6,117.3 Z M1852.3,119.2 L1854.2,117.7 L1857.1,118.4 L1858.6,120.6 L1857.1,123.6 L1855.6,125.4 L1854.5,123.6 L1852.7,121 Z" fill="#111"/>
<rect x="1850" y="157.2" width="11" height="2.6" fill="#111"/><rect x="1854.2" y="153" width="2.6" height="11" fill="#111"/>
<rect x="1850" y="186.6" width="11" height="2.6" fill="#111"/>
<polygon points="1855.5,211 1851.5,219.5 1859.5,219.5" fill="#111"/><polygon points="1851.5,220.5 1859.5,220.5 1855.5,228" fill="#c9c9c9"/>
<path d="M1855.5,263 C1853,259 1851,257 1851,254 A4.5,4.5 0 1 1 1860,254 C1860,257 1858,259 1855.5,263 Z" fill="none" stroke="#222" stroke-width="0.9"/><circle cx="1855.5" cy="254" r="1.4" fill="none" stroke="#222" stroke-width="0.8"/>
<path d="M1851.5,280 H1859.5 V291 H1851.5 Z M1850.5,279 H1860.5 M1853,277.5 H1858 M1853.5,282 V289 M1855.5,282 V289 M1857.5,282 V289" fill="none" stroke="#222" stroke-width="0.9"/>
<g fill="none" stroke="#b4b4b4" stroke-width="0.9"><circle cx="1855.5" cy="320" r="3"/><circle cx="1852.5" cy="325" r="3"/><circle cx="1858.5" cy="325" r="3"/><line x1="1848" y1="323.5" x2="1863" y2="323.5"/></g>
</svg>
<div class="b" style="left:1381px;top:976px;width:414px;height:100px;background:#fff;"></div>
<div class="b" style="left:1381px;top:976px;width:366px;height:40px;background:#c1c7cc;"></div>
<div class="t" style="left:1511px;top:988.81px;font-size:14.4px;color:#8a9097;font-weight:400;">Call a REST API</div>
<div class="b" style="left:1760.7px;top:992.5px;width:4.6px;height:4.6px;border-radius:50%;background:#000"></div>
<div class="b" style="left:1768.7px;top:992.5px;width:4.6px;height:4.6px;border-radius:50%;background:#000"></div>
<div class="b" style="left:1776.7px;top:992.5px;width:4.6px;height:4.6px;border-radius:50%;background:#000"></div>
</body></html>
